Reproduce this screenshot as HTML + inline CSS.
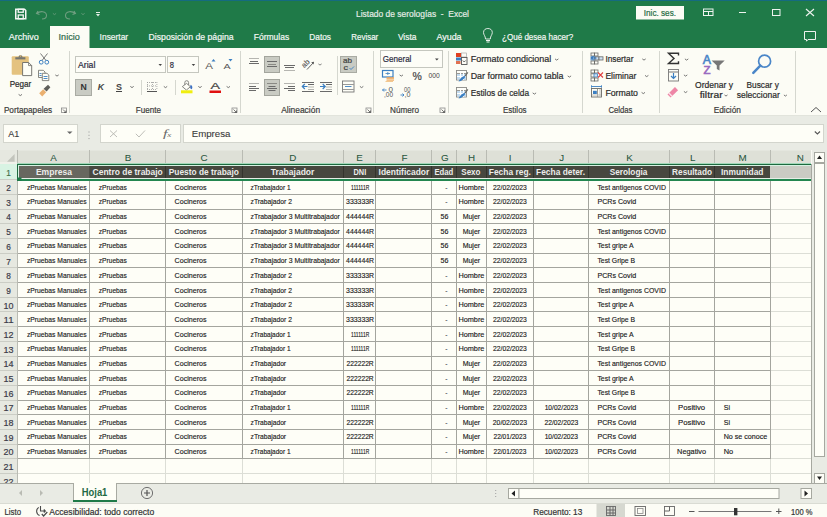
<!DOCTYPE html>
<html><head><meta charset="utf-8"><title>Listado de serologías - Excel</title>
<style>html,body{margin:0;padding:0;background:#fafaf3;overflow:hidden}svg{display:block}text{font-family:"Liberation Sans",sans-serif}</style>
</head><body>
<svg width="827" height="517" viewBox="0 0 827 517" font-family="Liberation Sans, sans-serif">
<rect x="0" y="0" width="827" height="48" fill="#1f7a48"/>
<rect x="0" y="0" width="827" height="1" fill="#156b80"/>
<path d="M15.75 9.25 H24.5 L25.75 10.5 V18.75 H15.75 Z" fill="none" stroke="#f4f7f4" stroke-width="1.5"/>
<rect x="18.25" y="9.25" width="5" height="3" fill="none" stroke="#f4f7f4" stroke-width="1.3"/>
<rect x="18.25" y="15" width="5" height="3.75" fill="none" stroke="#f4f7f4" stroke-width="1.3"/>
<path d="M38 11 L36.5 13.5 L39.5 14.5 M36.8 13.6 C40 10.5 46.5 11 46.5 15.5 C46.5 18 44 19 42 19" fill="none" stroke="#6f9e80" stroke-width="1.1"/>
<path d="M52.90 13.40 L54.50 14.60 L56.10 13.40" fill="none" stroke="#6f9e80" stroke-width="0.8"/>
<path d="M74 11 L75.5 13.5 L72.5 14.5 M75.2 13.6 C72 10.5 65.5 11 65.5 15.5 C65.5 18 68 19 70 19" fill="none" stroke="#6f9e80" stroke-width="1.1"/>
<path d="M81.40 13.40 L83.00 14.60 L84.60 13.40" fill="none" stroke="#6f9e80" stroke-width="0.8"/>
<rect x="96" y="12" width="4" height="1" fill="#e8efe9"/>
<path d="M96 14 L100 14 L98 16.5 Z" fill="#e8efe9"/>
<text x="356.00" y="17.40" font-size="9.3" fill="#e4ece6" stroke="#e4ece6" stroke-width="0.2" textLength="113.00" lengthAdjust="spacingAndGlyphs">Listado de serologías  -  Excel</text>
<rect x="636" y="6" width="48" height="13.5" fill="#fbfbf4"/>
<text x="643.80" y="15.60" font-size="9" fill="#1f6b42" stroke="#1f6b42" stroke-width="0.2" textLength="32.20" lengthAdjust="spacingAndGlyphs">Inic. ses.</text>
<rect x="703.5" y="9" width="9.5" height="6.5" fill="none" stroke="#eef3ef" stroke-width="1"/>
<rect x="704" y="11" width="9" height="1" fill="#eef3ef"/>
<rect x="708" y="11" width="1" height="4" fill="#eef3ef"/>
<rect x="739" y="12" width="7" height="1" fill="#eef3ef"/>
<rect x="772.5" y="9.5" width="7.5" height="6" fill="none" stroke="#eef3ef" stroke-width="1"/>
<path d="M806 9 L814 16 M814 9 L806 16" fill="none" stroke="#eef3ef" stroke-width="1.1"/>
<rect x="50" y="26" width="39.5" height="22" fill="#fcfcf5"/>
<text x="8.70" y="40.00" font-size="9.1" fill="#f4f7f4" stroke="#f4f7f4" stroke-width="0.2" textLength="30.00" lengthAdjust="spacingAndGlyphs">Archivo</text>
<text x="58.60" y="40.00" font-size="9.1" fill="#2e6a4a" stroke="#2e6a4a" stroke-width="0.2" textLength="21.20" lengthAdjust="spacingAndGlyphs">Inicio</text>
<text x="99.60" y="40.00" font-size="9.1" fill="#f4f7f4" stroke="#f4f7f4" stroke-width="0.2" textLength="28.60" lengthAdjust="spacingAndGlyphs">Insertar</text>
<text x="148.50" y="40.00" font-size="9.1" fill="#f4f7f4" stroke="#f4f7f4" stroke-width="0.2" textLength="85.10" lengthAdjust="spacingAndGlyphs">Disposición de página</text>
<text x="253.70" y="40.00" font-size="9.1" fill="#f4f7f4" stroke="#f4f7f4" stroke-width="0.2" textLength="35.50" lengthAdjust="spacingAndGlyphs">Fórmulas</text>
<text x="309.30" y="40.00" font-size="9.1" fill="#f4f7f4" stroke="#f4f7f4" stroke-width="0.2" textLength="21.70" lengthAdjust="spacingAndGlyphs">Datos</text>
<text x="351.20" y="40.00" font-size="9.1" fill="#f4f7f4" stroke="#f4f7f4" stroke-width="0.2" textLength="27.10" lengthAdjust="spacingAndGlyphs">Revisar</text>
<text x="397.90" y="40.00" font-size="9.1" fill="#f4f7f4" stroke="#f4f7f4" stroke-width="0.2" textLength="18.60" lengthAdjust="spacingAndGlyphs">Vista</text>
<text x="436.40" y="40.00" font-size="9.1" fill="#f4f7f4" stroke="#f4f7f4" stroke-width="0.2" textLength="25.20" lengthAdjust="spacingAndGlyphs">Ayuda</text>
<path d="M485.5 39 C485.5 36 483.5 35 483.5 32.5 C483.5 29.8 485.6 28.5 487.9 28.5 C490.2 28.5 492.3 29.8 492.3 32.5 C492.3 35 490.3 36 490.3 39 Z" fill="none" stroke="#f0f4f0" stroke-width="0.9"/>
<rect x="486" y="40" width="4" height="1" fill="#f0f4f0"/>
<rect x="486.5" y="41.5" width="3.0" height="1" fill="#f0f4f0"/>
<text x="502.00" y="40.00" font-size="9.1" fill="#f4f7f4" stroke="#f4f7f4" stroke-width="0.2" textLength="71.20" lengthAdjust="spacingAndGlyphs">¿Qué desea hacer?</text>
<path d="M804.5 31.5 H815.5 V39.5 H808 L806.5 41.2 V39.5 H804.5 Z" fill="none" stroke="#eef3ef" stroke-width="1"/>
<rect x="0" y="48" width="827" height="67" fill="#fcfcf5"/>
<rect x="0" y="115" width="827" height="1" fill="#e2e4dc"/>
<rect x="69" y="51" width="1" height="62" fill="#d5d7cf"/>
<rect x="240" y="51" width="1" height="62" fill="#d5d7cf"/>
<rect x="373" y="51" width="1" height="62" fill="#d5d7cf"/>
<rect x="448" y="51" width="1" height="62" fill="#d5d7cf"/>
<rect x="582" y="51" width="1" height="62" fill="#d5d7cf"/>
<rect x="659" y="51" width="1" height="62" fill="#d5d7cf"/>
<rect x="795" y="51" width="1" height="62" fill="#d5d7cf"/>
<text x="3.90" y="112.60" font-size="8.5" fill="#3c3c3c" stroke="#3c3c3c" stroke-width="0.2" textLength="48.30" lengthAdjust="spacingAndGlyphs">Portapapeles</text>
<text x="135.80" y="112.60" font-size="8.5" fill="#3c3c3c" stroke="#3c3c3c" stroke-width="0.2" textLength="25.20" lengthAdjust="spacingAndGlyphs">Fuente</text>
<text x="281.20" y="112.60" font-size="8.5" fill="#3c3c3c" stroke="#3c3c3c" stroke-width="0.2" textLength="38.90" lengthAdjust="spacingAndGlyphs">Alineación</text>
<text x="390.00" y="112.60" font-size="8.5" fill="#3c3c3c" stroke="#3c3c3c" stroke-width="0.2" textLength="29.00" lengthAdjust="spacingAndGlyphs">Número</text>
<text x="503.00" y="112.60" font-size="8.5" fill="#3c3c3c" stroke="#3c3c3c" stroke-width="0.2" textLength="23.60" lengthAdjust="spacingAndGlyphs">Estilos</text>
<text x="608.40" y="112.60" font-size="8.5" fill="#3c3c3c" stroke="#3c3c3c" stroke-width="0.2" textLength="24.00" lengthAdjust="spacingAndGlyphs">Celdas</text>
<text x="713.70" y="112.60" font-size="8.5" fill="#3c3c3c" stroke="#3c3c3c" stroke-width="0.2" textLength="27.20" lengthAdjust="spacingAndGlyphs">Edición</text>
<rect x="61.5" y="108.0" width="5" height="4.5" fill="none" stroke="#8a8a8a" stroke-width="0.8"/>
<path d="M63 109.5 L66 112.5 M66 110.5 V112.5 H64" fill="none" stroke="#555" stroke-width="0.8"/>
<rect x="232.0" y="108.0" width="5" height="4.5" fill="none" stroke="#8a8a8a" stroke-width="0.8"/>
<path d="M233.5 109.5 L236.5 112.5 M236.5 110.5 V112.5 H234.5" fill="none" stroke="#555" stroke-width="0.8"/>
<rect x="366.0" y="108.0" width="5" height="4.5" fill="none" stroke="#8a8a8a" stroke-width="0.8"/>
<path d="M367.5 109.5 L370.5 112.5 M370.5 110.5 V112.5 H368.5" fill="none" stroke="#555" stroke-width="0.8"/>
<rect x="440.0" y="108.0" width="5" height="4.5" fill="none" stroke="#8a8a8a" stroke-width="0.8"/>
<path d="M441.5 109.5 L444.5 112.5 M444.5 110.5 V112.5 H442.5" fill="none" stroke="#555" stroke-width="0.8"/>
<rect x="11.7" y="56.3" width="17.1" height="18.4" fill="#e4c27f" rx="1"/>
<rect x="15.3" y="57.2" width="10.1" height="2.2" fill="#77776f"/>
<path d="M18.4 57.5 A2.1 2.6 0 0 1 22.6 57.5 Z" fill="#77776f"/>
<circle cx="20.5" cy="56" r="0.8" fill="#e4c27f"/>
<path d="M22.6 62.5 H28.6 L31.7 65.6 V75.6 H22.6 Z" fill="#fefef7" stroke="#6a6a66" stroke-width="0.9"/>
<path d="M28.6 62.5 V65.6 H31.7" fill="none" stroke="#6a6a66" stroke-width="0.8"/>
<text x="9.70" y="86.80" font-size="9.1" fill="#2a2a2a" stroke="#2a2a2a" stroke-width="0.2" textLength="21.60" lengthAdjust="spacingAndGlyphs">Pegar</text>
<path d="M18.60 94.40 L20.30 95.60 L22.00 94.40" fill="none" stroke="#555" stroke-width="0.8"/>
<path d="M40.5 53.5 L46 60.5 M47.5 53.5 L42 60.5" fill="none" stroke="#6a6a6a" stroke-width="0.9"/>
<circle cx="41.2" cy="62.2" r="1.9" fill="none" stroke="#3b7fc2" stroke-width="1"/>
<circle cx="46.8" cy="62.2" r="1.9" fill="none" stroke="#3b7fc2" stroke-width="1"/>
<path d="M38.5 70.3 H43.3 L45 72 V77.5 H38.5 Z" fill="#fefef7" stroke="#6a6a66" stroke-width="0.8"/>
<path d="M42.3 73.3 H47 L48.8 75 V80.6 H42.3 Z" fill="#fefef7" stroke="#6a6a66" stroke-width="0.8"/>
<rect x="39.5" y="73" width="2" height="0.9" fill="#3b7fc2"/>
<rect x="39.5" y="75" width="2" height="0.9" fill="#3b7fc2"/>
<rect x="43.5" y="76" width="4" height="0.9" fill="#3b7fc2"/>
<rect x="43.5" y="78" width="4" height="0.9" fill="#3b7fc2"/>
<path d="M55.30 74.90 L57.00 76.10 L58.70 74.90" fill="none" stroke="#555" stroke-width="0.8"/>
<path d="M39.2 93.3 L43.2 89.3 L46.2 92.3 L42.2 96.6 Z" fill="#eab070"/>
<path d="M43.6 88.8 L48 84.8 L50.4 87.2 L46.6 91.6 Z" fill="#5f5f5a"/>
<rect x="75.5" y="56.5" width="90" height="16" fill="#fdfdf7" stroke="#c5c7bf" stroke-width="1"/>
<text x="78.00" y="68.00" font-size="9.3" fill="#2a2a40" stroke="#2a2a40" stroke-width="0.2" textLength="17.40" lengthAdjust="spacingAndGlyphs">Arial</text>
<path d="M158.5 64 L162 64 L160.25 66 Z" fill="#444"/>
<rect x="167.5" y="56.5" width="31" height="16" fill="#fdfdf7" stroke="#c5c7bf" stroke-width="1"/>
<text x="169.80" y="68.00" font-size="9.3" fill="#2a2a40" stroke="#2a2a40" stroke-width="0.2" textLength="4.20" lengthAdjust="spacingAndGlyphs">8</text>
<path d="M191.7 64 L195.2 64 L193.45 66 Z" fill="#444"/>
<text x="205.30" y="69.20" font-size="9.5" fill="#555" textLength="7.70" lengthAdjust="spacingAndGlyphs">A</text>
<path d="M211.5 61.5 L213.5 59 L215.5 61.5 Z" fill="#3b7fc2"/>
<text x="223.40" y="69.20" font-size="8" fill="#555" textLength="7.10" lengthAdjust="spacingAndGlyphs">A</text>
<path d="M228.5 59 L232.5 59 L230.5 61.5 Z" fill="#3b7fc2"/>
<rect x="75.5" y="79.5" width="16" height="16" fill="#c9cbc3" stroke="#a9aba3" stroke-width="1"/>
<text x="83.60" y="89.90" font-size="8.6" fill="#333" font-weight="bold" text-anchor="middle" textLength="6.30" lengthAdjust="spacingAndGlyphs">N</text>
<text x="100.80" y="89.90" font-size="8.6" fill="#444" font-weight="bold" font-style="italic" text-anchor="middle" textLength="6.30" lengthAdjust="spacingAndGlyphs">K</text>
<text x="119.00" y="89.90" font-size="8.6" fill="#444" font-weight="bold" text-anchor="middle" textLength="6.00" lengthAdjust="spacingAndGlyphs">S</text>
<rect x="116" y="91" width="6" height="1" fill="#444"/>
<path d="M130.30 86.40 L132.00 87.60 L133.70 86.40" fill="none" stroke="#555" stroke-width="0.8"/>
<rect x="141" y="80" width="1" height="15" fill="#d5d7cf"/>
<rect x="147" y="82" width="1" height="0.8" fill="#9a9a9a"/>
<rect x="149" y="82" width="1" height="0.8" fill="#9a9a9a"/>
<rect x="151" y="82" width="1" height="0.8" fill="#9a9a9a"/>
<rect x="153" y="82" width="1" height="0.8" fill="#9a9a9a"/>
<rect x="155" y="82" width="1" height="0.8" fill="#9a9a9a"/>
<rect x="147" y="85.5" width="1" height="0.8" fill="#9a9a9a"/>
<rect x="149" y="85.5" width="1" height="0.8" fill="#9a9a9a"/>
<rect x="151" y="85.5" width="1" height="0.8" fill="#9a9a9a"/>
<rect x="153" y="85.5" width="1" height="0.8" fill="#9a9a9a"/>
<rect x="155" y="85.5" width="1" height="0.8" fill="#9a9a9a"/>
<rect x="147" y="89" width="1" height="0.8" fill="#9a9a9a"/>
<rect x="149" y="89" width="1" height="0.8" fill="#9a9a9a"/>
<rect x="151" y="89" width="1" height="0.8" fill="#9a9a9a"/>
<rect x="153" y="89" width="1" height="0.8" fill="#9a9a9a"/>
<rect x="155" y="89" width="1" height="0.8" fill="#9a9a9a"/>
<rect x="147" y="82" width="0.8" height="1" fill="#9a9a9a"/>
<rect x="147" y="84" width="0.8" height="1" fill="#9a9a9a"/>
<rect x="147" y="86" width="0.8" height="1" fill="#9a9a9a"/>
<rect x="147" y="88" width="0.8" height="1" fill="#9a9a9a"/>
<rect x="152" y="82" width="0.8" height="1" fill="#9a9a9a"/>
<rect x="152" y="84" width="0.8" height="1" fill="#9a9a9a"/>
<rect x="152" y="86" width="0.8" height="1" fill="#9a9a9a"/>
<rect x="152" y="88" width="0.8" height="1" fill="#9a9a9a"/>
<rect x="156.5" y="82" width="0.8" height="1" fill="#9a9a9a"/>
<rect x="156.5" y="84" width="0.8" height="1" fill="#9a9a9a"/>
<rect x="156.5" y="86" width="0.8" height="1" fill="#9a9a9a"/>
<rect x="156.5" y="88" width="0.8" height="1" fill="#9a9a9a"/>
<rect x="147" y="91" width="10" height="1" fill="#555"/>
<path d="M163.80 86.40 L165.50 87.60 L167.20 86.40" fill="none" stroke="#555" stroke-width="0.8"/>
<rect x="175" y="80" width="1" height="15" fill="#d5d7cf"/>
<path d="M184.8 85.5 V82.6 A1.9 1.9 0 0 1 188.6 82.6 V85.5" fill="none" stroke="#7a7a76" stroke-width="0.9"/>
<path d="M182.3 86.6 L186.6 83.4 L190.4 86.8 L186.4 90 Z" fill="#fefef7" stroke="#7a7a76" stroke-width="0.9"/>
<path d="M190.6 84.8 C192.8 86 192.8 88.6 191.2 89.3 C190 88.8 189.9 86.6 190.6 84.8 Z" fill="#3b6fc2"/>
<rect x="181" y="90.3" width="11.5" height="3" fill="#f0ee10"/>
<path d="M198.30 86.40 L200.00 87.60 L201.70 86.40" fill="none" stroke="#555" stroke-width="0.8"/>
<text x="210.50" y="89.40" font-size="8.5" fill="#444" stroke="#444" stroke-width="0.2" textLength="9.50" lengthAdjust="spacingAndGlyphs">A</text>
<rect x="209.5" y="90.5" width="11.5" height="2.5" fill="#e01010"/>
<path d="M226.60 86.40 L228.30 87.60 L230.00 86.40" fill="none" stroke="#555" stroke-width="0.8"/>
<rect x="249" y="58" width="10" height="1" fill="#b5b5b0"/>
<rect x="250" y="61" width="8" height="1" fill="#6a6a6a"/>
<rect x="249" y="63" width="10" height="1" fill="#6a6a6a"/>
<rect x="264.5" y="56.5" width="15" height="16" fill="#c9cbc3" stroke="#a3a59d" stroke-width="1"/>
<rect x="267" y="61" width="10" height="1" fill="#6a6a6a"/>
<rect x="268" y="64" width="8" height="1" fill="#8a8a85"/>
<rect x="267" y="66" width="10" height="1" fill="#6a6a6a"/>
<rect x="284" y="65" width="11" height="1" fill="#6a6a6a"/>
<rect x="285" y="67" width="9" height="1" fill="#6a6a6a"/>
<rect x="284" y="70" width="11" height="1" fill="#b5b5b0"/>
<text x="0" y="0" font-size="7.5" fill="#555" stroke="#555" stroke-width="0.15" transform="translate(304.2,68.2) rotate(-45)">ab</text>
<path d="M307 69.5 L313.5 62.5" fill="none" stroke="#555" stroke-width="0.9"/>
<path d="M311.2 62.3 L314 61.8 L313.6 64.6 Z" fill="#555"/>
<path d="M318.40 63.95 L320.00 65.05 L321.60 63.95" fill="none" stroke="#666" stroke-width="0.8"/>
<rect x="249" y="83" width="10" height="1" fill="#b5b5b0"/>
<rect x="249" y="86" width="7" height="1" fill="#6a6a6a"/>
<rect x="249" y="88" width="10" height="1" fill="#6a6a6a"/>
<rect x="249" y="90" width="7" height="1" fill="#6a6a6a"/>
<rect x="264.5" y="79.5" width="15" height="16" fill="#c9cbc3" stroke="#a3a59d" stroke-width="1"/>
<rect x="267" y="83" width="10" height="1" fill="#8a8a85"/>
<rect x="268.5" y="86" width="7.0" height="1" fill="#6a6a6a"/>
<rect x="267" y="88" width="10" height="1" fill="#6a6a6a"/>
<rect x="268.5" y="90" width="7.0" height="1" fill="#6a6a6a"/>
<rect x="284" y="83" width="11" height="1" fill="#b5b5b0"/>
<rect x="288" y="86" width="7" height="1" fill="#6a6a6a"/>
<rect x="284" y="88" width="11" height="1" fill="#6a6a6a"/>
<rect x="288" y="90" width="7" height="1" fill="#6a6a6a"/>
<rect x="302" y="82" width="12" height="1" fill="#6a6a6a"/>
<rect x="308" y="84" width="6" height="1" fill="#6a6a6a"/>
<rect x="308" y="86.5" width="6" height="1" fill="#b5b5b0"/>
<rect x="308" y="89" width="6" height="1" fill="#b5b5b0"/>
<rect x="302" y="91" width="12" height="1" fill="#6a6a6a"/>
<rect x="320" y="82" width="12" height="1" fill="#6a6a6a"/>
<rect x="326" y="84" width="6" height="1" fill="#6a6a6a"/>
<rect x="326" y="86.5" width="6" height="1" fill="#b5b5b0"/>
<rect x="326" y="89" width="6" height="1" fill="#b5b5b0"/>
<rect x="320" y="91" width="12" height="1" fill="#6a6a6a"/>
<path d="M302.5 86.5 H307.5 M304.8 84 L302.3 86.5 L304.8 89" fill="none" stroke="#3b7fc2" stroke-width="1.2"/>
<path d="M320 86.5 H325 M322.7 84 L325.2 86.5 L322.7 89" fill="none" stroke="#3b7fc2" stroke-width="1.2"/>
<rect x="337" y="56" width="1" height="39" fill="#d5d7cf"/>
<rect x="340.5" y="56.5" width="16" height="16" fill="#c9cbc3" stroke="#a9aba3" stroke-width="1"/>
<text x="343.00" y="63.30" font-size="6.5" fill="#444" stroke="#444" stroke-width="0.2" textLength="9.00" lengthAdjust="spacingAndGlyphs">ab</text>
<text x="343.50" y="69.80" font-size="6.5" fill="#444" stroke="#444" stroke-width="0.2" textLength="4.50" lengthAdjust="spacingAndGlyphs">c</text>
<path d="M349.5 68 L351 69.5 L354 66.5" fill="none" stroke="#3b7fc2" stroke-width="0.9"/>
<rect x="342.5" y="81" width="11.5" height="11" fill="#fdfdf6" stroke="#777" stroke-width="0.9"/>
<rect x="343" y="84" width="11" height="1" fill="#999"/>
<rect x="343" y="89" width="11" height="1" fill="#999"/>
<path d="M345 86.5 H351.5" fill="none" stroke="#3b7fc2" stroke-width="0.9"/>
<path d="M359.90 86.40 L361.60 87.60 L363.30 86.40" fill="none" stroke="#555" stroke-width="0.8"/>
<rect x="380.5" y="50.5" width="62" height="17" fill="#fdfdf7" stroke="#c5c7bf" stroke-width="1"/>
<text x="382.80" y="62.00" font-size="9.2" fill="#2a2a40" stroke="#2a2a40" stroke-width="0.2" textLength="28.60" lengthAdjust="spacingAndGlyphs">General</text>
<path d="M435 58.5 L438.7 58.5 L436.85 60.5 Z" fill="#444"/>
<rect x="382.5" y="70.5" width="10.5" height="6.5" fill="#fefef7" stroke="#3b7fc2" stroke-width="1.2"/>
<path d="M385.5 73.5 H390 M387.8 72 V75" fill="none" stroke="#3b7fc2" stroke-width="0.8"/>
<rect x="386.5" y="77.2" width="7.5" height="1.6" fill="#eda35a"/>
<rect x="386.5" y="79.3" width="7.5" height="1.6" fill="#f2bc80"/>
<rect x="385.5" y="81" width="7.5" height="1" fill="#f2c890"/>
<path d="M399.60 74.90 L401.30 76.10 L403.00 74.90" fill="none" stroke="#555" stroke-width="0.8"/>
<text x="412.50" y="80.00" font-size="10.5" fill="#444" stroke="#444" stroke-width="0.2" textLength="9.30" lengthAdjust="spacingAndGlyphs">%</text>
<text x="428.50" y="78.00" font-size="6.8" fill="#444" textLength="11.20" lengthAdjust="spacingAndGlyphs">000</text>
<text x="388.50" y="92.00" font-size="6.5" fill="#555" textLength="4.50" lengthAdjust="spacingAndGlyphs">0</text>
<text x="384.00" y="97.30" font-size="6.5" fill="#555" textLength="9.00" lengthAdjust="spacingAndGlyphs">,00</text>
<path d="M382.5 90 H386.5 M384 88.5 L382.5 90 L384 91.5" fill="none" stroke="#3b7fc2" stroke-width="0.9"/>
<text x="404.00" y="92.00" font-size="6.5" fill="#555" textLength="6.50" lengthAdjust="spacingAndGlyphs">00</text>
<text x="404.50" y="97.30" font-size="6.5" fill="#555" textLength="6.00" lengthAdjust="spacingAndGlyphs">,0</text>
<path d="M400.5 95 H404 M402.5 93.5 L404 95 L402.5 96.5" fill="none" stroke="#3b7fc2" stroke-width="0.9"/>
<rect x="456" y="53" width="5" height="4" fill="#e04020"/>
<rect x="456" y="57.5" width="5" height="3" fill="#3b7fc2"/>
<rect x="461.5" y="53" width="5" height="4" fill="#fdfdf6" stroke="#999" stroke-width="0.6"/>
<rect x="461.5" y="57.5" width="5.5" height="7" fill="#fdfdf6" stroke="#555" stroke-width="0.9"/>
<path d="M462.8 60.5 L464.2 62 L465.6 60.5" fill="none" stroke="#444" stroke-width="0.8"/>
<rect x="456" y="61" width="4.5" height="3" fill="#e07050"/>
<text x="470.70" y="62.10" font-size="9.2" fill="#2a2a2a" stroke="#2a2a2a" stroke-width="0.2" textLength="80.60" lengthAdjust="spacingAndGlyphs">Formato condicional</text>
<path d="M555.00 58.90 L556.70 60.10 L558.40 58.90" fill="none" stroke="#555" stroke-width="0.8"/>
<rect x="456.5" y="70.5" width="10" height="9.5" fill="#fefef7" stroke="#8a8a86" stroke-width="0.9"/>
<rect x="457" y="73" width="9" height="6.5" fill="#c3dcf0"/>
<rect x="457" y="73" width="9" height="1" fill="#9a9a96"/>
<rect x="457" y="76" width="9" height="1" fill="#ffffff"/>
<rect x="460" y="71" width="1" height="9" fill="#ffffff"/>
<rect x="463" y="71" width="1" height="9" fill="#ffffff"/>
<path d="M464.5 75.5 L467.5 72 L468.3 72.8 L465.5 76.5 Z" fill="#6a6a66"/>
<path d="M458.5 81.5 C459.5 79 462 77 464.5 75.8 L465.3 76.7 C464 79 462 81 458.5 81.5 Z" fill="#3b7fc2"/>
<text x="470.70" y="79.00" font-size="9.2" fill="#2a2a2a" stroke="#2a2a2a" stroke-width="0.2" textLength="92.80" lengthAdjust="spacingAndGlyphs">Dar formato como tabla</text>
<path d="M567.70 75.90 L569.40 77.10 L571.10 75.90" fill="none" stroke="#555" stroke-width="0.8"/>
<rect x="456.5" y="87.5" width="10" height="9.5" fill="#fefef7" stroke="#8a8a86" stroke-width="0.9"/>
<rect x="457" y="90" width="9" height="6.5" fill="#c3dcf0"/>
<rect x="457" y="90" width="9" height="1" fill="#9a9a96"/>
<rect x="457" y="93" width="9" height="1" fill="#ffffff"/>
<rect x="460" y="88" width="1" height="9" fill="#ffffff"/>
<rect x="463" y="88" width="1" height="9" fill="#ffffff"/>
<path d="M464.5 92.5 L467.5 89 L468.3 89.8 L465.5 93.5 Z" fill="#6a6a66"/>
<path d="M458.5 98.5 C459.5 96 462 94 464.5 92.8 L465.3 93.7 C464 96 462 98 458.5 98.5 Z" fill="#3b7fc2"/>
<text x="470.70" y="96.00" font-size="9.2" fill="#2a2a2a" stroke="#2a2a2a" stroke-width="0.2" textLength="58.40" lengthAdjust="spacingAndGlyphs">Estilos de celda</text>
<path d="M532.70 92.90 L534.40 94.10 L536.10 92.90" fill="none" stroke="#555" stroke-width="0.8"/>
<rect x="591.0" y="53.0" width="3.5" height="3" fill="none" stroke="#6a6a66" stroke-width="0.8"/>
<rect x="594.5" y="53.0" width="3.5" height="3" fill="none" stroke="#6a6a66" stroke-width="0.8"/>
<rect x="591.0" y="56.8" width="4" height="3.2" fill="#cfe2f3" stroke="#3b7fc2" stroke-width="0.8"/>
<rect x="595.0" y="56.8" width="4" height="3.2" fill="#cfe2f3" stroke="#6a6a66" stroke-width="0.8"/>
<rect x="599.0" y="56.8" width="4" height="3.2" fill="#cfe2f3" stroke="#6a6a66" stroke-width="0.8"/>
<rect x="591.0" y="61.0" width="3.5" height="3" fill="none" stroke="#6a6a66" stroke-width="0.8"/>
<rect x="594.5" y="61.0" width="3.5" height="3" fill="none" stroke="#6a6a66" stroke-width="0.8"/>
<path d="M596.5 58 H591.5 M593.5 56.3 L591.3 58 L593.5 59.7" fill="none" stroke="#1f66b0" stroke-width="1"/>
<text x="605.40" y="62.00" font-size="9.2" fill="#2a2a2a" stroke="#2a2a2a" stroke-width="0.2" textLength="28.10" lengthAdjust="spacingAndGlyphs">Insertar</text>
<path d="M642.30 58.90 L644.00 60.10 L645.70 58.90" fill="none" stroke="#555" stroke-width="0.8"/>
<rect x="591.0" y="70.0" width="3.5" height="3" fill="none" stroke="#6a6a66" stroke-width="0.8"/>
<rect x="594.5" y="70.0" width="3.5" height="3" fill="none" stroke="#6a6a66" stroke-width="0.8"/>
<rect x="591.0" y="73.8" width="3.5" height="3.2" fill="none" stroke="#6a6a66" stroke-width="0.8"/>
<rect x="594.0" y="73.8" width="3.5" height="3.2" fill="#cfe2f3" stroke="#3b7fc2" stroke-width="0.8"/>
<rect x="591.0" y="78.0" width="3.5" height="3" fill="none" stroke="#6a6a66" stroke-width="0.8"/>
<rect x="594.5" y="78.0" width="3.5" height="3" fill="none" stroke="#6a6a66" stroke-width="0.8"/>
<path d="M598 72.5 L603 77.5 M603 72.5 L598 77.5" fill="none" stroke="#e04040" stroke-width="1.1"/>
<text x="605.40" y="78.70" font-size="9.2" fill="#2a2a2a" stroke="#2a2a2a" stroke-width="0.2" textLength="30.90" lengthAdjust="spacingAndGlyphs">Eliminar</text>
<path d="M645.00 75.40 L646.70 76.60 L648.40 75.40" fill="none" stroke="#555" stroke-width="0.8"/>
<path d="M591.5 86.5 H601.5 M591.5 85.3 V87.7 M601.5 85.3 V87.7" fill="none" stroke="#3b7fc2" stroke-width="0.9"/>
<rect x="591.5" y="88.5" width="10" height="8.5" fill="#fefef7" stroke="#6a6a66" stroke-width="0.9"/>
<rect x="597" y="89" width="1" height="8" fill="#9a9a96"/>
<rect x="599.5" y="89" width="1" height="8" fill="#c0c0bc"/>
<rect x="592" y="94.5" width="9" height="1" fill="#c0c0bc"/>
<rect x="593" y="90.8" width="3.8" height="3.2" fill="#3b7fc2"/>
<text x="605.40" y="95.50" font-size="9.2" fill="#2a2a2a" stroke="#2a2a2a" stroke-width="0.2" textLength="32.60" lengthAdjust="spacingAndGlyphs">Formato</text>
<path d="M641.60 92.40 L643.30 93.60 L645.00 92.40" fill="none" stroke="#555" stroke-width="0.8"/>
<path d="M678.5 55.5 V53.3 H668.5 L674 58.5 L668.5 63.5 H678.5 V61.3" fill="none" stroke="#333" stroke-width="1.4" stroke-linejoin="miter"/>
<path d="M684.90 58.90 L686.60 60.10 L688.30 58.90" fill="none" stroke="#555" stroke-width="0.8"/>
<rect x="668.5" y="69.5" width="10" height="11.5" fill="#fdfdf6" stroke="#777" stroke-width="0.9"/>
<rect x="669" y="71.5" width="9" height="1" fill="#777"/>
<path d="M673.5 73 V78.5 M671 76 L673.5 78.5 L676 76" fill="none" stroke="#3b7fc2" stroke-width="1.2"/>
<path d="M683.90 74.90 L685.60 76.10 L687.30 74.90" fill="none" stroke="#555" stroke-width="0.8"/>
<path d="M667.53 94.46 L674.96 87.03 L678.07 90.14 L670.64 97.57 Z" fill="#ee86a6"/>
<path d="M668.42 93.57 L669.39 92.60 L672.50 95.71 L671.53 96.68 Z" fill="#fbe3ea"/>
<path d="M683.90 91.40 L685.60 92.60 L687.30 91.40" fill="none" stroke="#555" stroke-width="0.8"/>
<text x="706.90" y="64.30" font-size="12" fill="#4a86c8" stroke="#4a86c8" stroke-width="0.6" text-anchor="middle" textLength="8.20" lengthAdjust="spacingAndGlyphs">A</text>
<text x="706.90" y="74.00" font-size="11.5" fill="#9868bf" stroke="#9868bf" stroke-width="0.6" text-anchor="middle" textLength="7.00" lengthAdjust="spacingAndGlyphs">Z</text>
<path d="M711.6 60.5 H724.7 L719.5 65.5 V70.5 L716.8 69 V65.5 Z" fill="#777"/>
<text x="695.00" y="87.60" font-size="9.2" fill="#2a2a2a" stroke="#2a2a2a" stroke-width="0.2" textLength="38.00" lengthAdjust="spacingAndGlyphs">Ordenar y</text>
<text x="699.70" y="98.00" font-size="9.2" fill="#2a2a2a" stroke="#2a2a2a" stroke-width="0.2" textLength="22.90" lengthAdjust="spacingAndGlyphs">filtrar</text>
<path d="M724.50 94.95 L726.00 96.05 L727.50 94.95" fill="none" stroke="#555" stroke-width="0.8"/>
<circle cx="764.6" cy="61.2" r="6" fill="none" stroke="#4a86c8" stroke-width="1.7"/>
<path d="M760.3 65.6 L753.3 72.8" fill="none" stroke="#4a86c8" stroke-width="2.5" stroke-linecap="round"/>
<text x="746.50" y="87.60" font-size="9.2" fill="#2a2a2a" stroke="#2a2a2a" stroke-width="0.2" textLength="32.30" lengthAdjust="spacingAndGlyphs">Buscar y</text>
<text x="736.70" y="98.00" font-size="9.2" fill="#2a2a2a" stroke="#2a2a2a" stroke-width="0.2" textLength="43.10" lengthAdjust="spacingAndGlyphs">seleccionar</text>
<path d="M783.90 94.95 L785.40 96.05 L786.90 94.95" fill="none" stroke="#555" stroke-width="0.8"/>
<path d="M811 112 L816 107.5 L821 112" fill="none" stroke="#555" stroke-width="1"/>
<rect x="0" y="116" width="827" height="34" fill="#e9ebe4"/>
<rect x="3.5" y="124.5" width="74" height="18" fill="#fefef7" stroke="#d3d5cd" stroke-width="1"/>
<text x="8.20" y="136.80" font-size="9.3" fill="#3a3a3a" stroke="#3a3a3a" stroke-width="0.1" textLength="11.10" lengthAdjust="spacingAndGlyphs">A1</text>
<path d="M67 131.5 L72.5 131.5 L69.75 134 Z" fill="#666"/>
<rect x="88.5" y="131.5" width="1" height="1" fill="#999"/>
<rect x="88.5" y="134.8" width="1" height="1" fill="#999"/>
<rect x="88.5" y="138.1" width="1" height="1" fill="#999"/>
<rect x="100.5" y="124.5" width="80" height="18" fill="#fefef7" stroke="#d3d5cd" stroke-width="1"/>
<path d="M110 130.5 L117 137 M117 130.5 L110 137" fill="none" stroke="#b5b5b0" stroke-width="0.9"/>
<path d="M135.8 133.8 L139 137 L145 130.5" fill="none" stroke="#b5b5b0" stroke-width="0.9"/>
<text x="163.00" y="136.80" font-size="10" fill="#6a6a6a" font-style="italic" textLength="4.50" lengthAdjust="spacingAndGlyphs" style="font-family:&quot;Liberation Serif&quot;,serif">f</text>
<text x="167.30" y="137.20" font-size="7" fill="#6a6a6a" font-style="italic" textLength="4.00" lengthAdjust="spacingAndGlyphs" style="font-family:&quot;Liberation Serif&quot;,serif">x</text>
<rect x="183.5" y="124.5" width="640" height="18" fill="#fefef7" stroke="#d3d5cd" stroke-width="1"/>
<text x="191.70" y="137.20" font-size="9.3" fill="#3a3a3a" stroke="#3a3a3a" stroke-width="0.1" textLength="38.70" lengthAdjust="spacingAndGlyphs">Empresa</text>
<path d="M814.80 131.50 L817.40 133.90 L820.00 131.50" fill="none" stroke="#555" stroke-width="1.1"/>
<rect x="17" y="164" width="795" height="319" fill="#fefef7"/>
<rect x="0" y="150" width="17" height="14" fill="#e6e8e0"/>
<rect x="0" y="162" width="17" height="2" fill="#f0f1ea"/>
<path d="M14.6 154 L14.6 161.7 L7 161.7 Z" fill="#c2c4bc"/>
<rect x="0" y="164" width="17" height="319" fill="#e6e8e0"/>
<rect x="17" y="150" width="794" height="13" fill="#dee0d7"/>
<rect x="17" y="150" width="794" height="1" fill="#e4e6de"/>
<rect x="89" y="150" width="1" height="13" fill="#b9bbb3"/>
<rect x="165" y="150" width="1" height="13" fill="#b9bbb3"/>
<rect x="242" y="150" width="1" height="13" fill="#b9bbb3"/>
<rect x="343" y="150" width="1" height="13" fill="#b9bbb3"/>
<rect x="375" y="150" width="1" height="13" fill="#b9bbb3"/>
<rect x="431" y="150" width="1" height="13" fill="#b9bbb3"/>
<rect x="456" y="150" width="1" height="13" fill="#b9bbb3"/>
<rect x="486" y="150" width="1" height="13" fill="#b9bbb3"/>
<rect x="533" y="150" width="1" height="13" fill="#b9bbb3"/>
<rect x="588" y="150" width="1" height="13" fill="#b9bbb3"/>
<rect x="669" y="150" width="1" height="13" fill="#b9bbb3"/>
<rect x="714" y="150" width="1" height="13" fill="#b9bbb3"/>
<rect x="770" y="150" width="1" height="13" fill="#b9bbb3"/>
<text x="53.40" y="160.80" font-size="9.8" fill="#27553d" stroke="#27553d" stroke-width="0.05" text-anchor="middle">A</text>
<text x="128.00" y="160.80" font-size="9.8" fill="#27553d" stroke="#27553d" stroke-width="0.05" text-anchor="middle">B</text>
<text x="204.00" y="160.80" font-size="9.8" fill="#27553d" stroke="#27553d" stroke-width="0.05" text-anchor="middle">C</text>
<text x="292.70" y="160.80" font-size="9.8" fill="#27553d" stroke="#27553d" stroke-width="0.05" text-anchor="middle">D</text>
<text x="359.50" y="160.80" font-size="9.8" fill="#27553d" stroke="#27553d" stroke-width="0.05" text-anchor="middle">E</text>
<text x="404.40" y="160.80" font-size="9.8" fill="#27553d" stroke="#27553d" stroke-width="0.05" text-anchor="middle">F</text>
<text x="444.70" y="160.80" font-size="9.8" fill="#27553d" stroke="#27553d" stroke-width="0.05" text-anchor="middle">G</text>
<text x="471.60" y="160.80" font-size="9.8" fill="#27553d" stroke="#27553d" stroke-width="0.05" text-anchor="middle">H</text>
<text x="510.00" y="160.80" font-size="9.8" fill="#27553d" stroke="#27553d" stroke-width="0.05" text-anchor="middle">I</text>
<text x="561.60" y="160.80" font-size="9.8" fill="#27553d" stroke="#27553d" stroke-width="0.05" text-anchor="middle">J</text>
<text x="629.50" y="160.80" font-size="9.8" fill="#27553d" stroke="#27553d" stroke-width="0.05" text-anchor="middle">K</text>
<text x="692.70" y="160.80" font-size="9.8" fill="#27553d" stroke="#27553d" stroke-width="0.05" text-anchor="middle">L</text>
<text x="742.70" y="160.80" font-size="9.8" fill="#27553d" stroke="#27553d" stroke-width="0.05" text-anchor="middle">M</text>
<text x="800.20" y="160.80" font-size="9.8" fill="#27553d" stroke="#27553d" stroke-width="0.05" text-anchor="middle">N</text>
<rect x="0" y="179" width="17" height="1" fill="#cbcdc5"/>
<rect x="0" y="194" width="17" height="1" fill="#cbcdc5"/>
<rect x="0" y="209" width="17" height="1" fill="#cbcdc5"/>
<rect x="0" y="223" width="17" height="1" fill="#cbcdc5"/>
<rect x="0" y="238" width="17" height="1" fill="#cbcdc5"/>
<rect x="0" y="253" width="17" height="1" fill="#cbcdc5"/>
<rect x="0" y="267" width="17" height="1" fill="#cbcdc5"/>
<rect x="0" y="282" width="17" height="1" fill="#cbcdc5"/>
<rect x="0" y="297" width="17" height="1" fill="#cbcdc5"/>
<rect x="0" y="311" width="17" height="1" fill="#cbcdc5"/>
<rect x="0" y="326" width="17" height="1" fill="#cbcdc5"/>
<rect x="0" y="341" width="17" height="1" fill="#cbcdc5"/>
<rect x="0" y="356" width="17" height="1" fill="#cbcdc5"/>
<rect x="0" y="370" width="17" height="1" fill="#cbcdc5"/>
<rect x="0" y="385" width="17" height="1" fill="#cbcdc5"/>
<rect x="0" y="400" width="17" height="1" fill="#cbcdc5"/>
<rect x="0" y="414" width="17" height="1" fill="#cbcdc5"/>
<rect x="0" y="429" width="17" height="1" fill="#cbcdc5"/>
<rect x="0" y="444" width="17" height="1" fill="#cbcdc5"/>
<rect x="0" y="458" width="17" height="1" fill="#cbcdc5"/>
<rect x="0" y="473" width="17" height="1" fill="#cbcdc5"/>
<rect x="17" y="150" width="1" height="333" fill="#b9bbb3"/>
<rect x="0" y="164" width="17" height="15" fill="#d8f3e3"/>
<rect x="18" y="458" width="793" height="1" fill="#dcded6"/>
<rect x="18" y="473" width="793" height="1" fill="#dcded6"/>
<rect x="18" y="488" width="793" height="1" fill="#dcded6"/>
<rect x="89" y="458" width="1" height="25" fill="#dcded6"/>
<rect x="165" y="458" width="1" height="25" fill="#dcded6"/>
<rect x="242" y="458" width="1" height="25" fill="#dcded6"/>
<rect x="343" y="458" width="1" height="25" fill="#dcded6"/>
<rect x="375" y="458" width="1" height="25" fill="#dcded6"/>
<rect x="431" y="458" width="1" height="25" fill="#dcded6"/>
<rect x="456" y="458" width="1" height="25" fill="#dcded6"/>
<rect x="486" y="458" width="1" height="25" fill="#dcded6"/>
<rect x="533" y="458" width="1" height="25" fill="#dcded6"/>
<rect x="588" y="458" width="1" height="25" fill="#dcded6"/>
<rect x="669" y="458" width="1" height="25" fill="#dcded6"/>
<rect x="714" y="458" width="1" height="25" fill="#dcded6"/>
<rect x="770" y="458" width="1" height="25" fill="#dcded6"/>
<rect x="771" y="179" width="40" height="1" fill="#dcded6"/>
<rect x="771" y="194" width="40" height="1" fill="#dcded6"/>
<rect x="771" y="209" width="40" height="1" fill="#dcded6"/>
<rect x="771" y="223" width="40" height="1" fill="#dcded6"/>
<rect x="771" y="238" width="40" height="1" fill="#dcded6"/>
<rect x="771" y="253" width="40" height="1" fill="#dcded6"/>
<rect x="771" y="267" width="40" height="1" fill="#dcded6"/>
<rect x="771" y="282" width="40" height="1" fill="#dcded6"/>
<rect x="771" y="297" width="40" height="1" fill="#dcded6"/>
<rect x="771" y="311" width="40" height="1" fill="#dcded6"/>
<rect x="771" y="326" width="40" height="1" fill="#dcded6"/>
<rect x="771" y="341" width="40" height="1" fill="#dcded6"/>
<rect x="771" y="356" width="40" height="1" fill="#dcded6"/>
<rect x="771" y="370" width="40" height="1" fill="#dcded6"/>
<rect x="771" y="385" width="40" height="1" fill="#dcded6"/>
<rect x="771" y="400" width="40" height="1" fill="#dcded6"/>
<rect x="771" y="414" width="40" height="1" fill="#dcded6"/>
<rect x="771" y="429" width="40" height="1" fill="#dcded6"/>
<rect x="771" y="444" width="40" height="1" fill="#dcded6"/>
<rect x="771" y="458" width="40" height="1" fill="#dcded6"/>
<rect x="811" y="164" width="1" height="319" fill="#a6a8a0"/>
<rect x="18" y="194" width="753" height="1" fill="#a4a59e"/>
<rect x="18" y="209" width="753" height="1" fill="#a4a59e"/>
<rect x="18" y="223" width="753" height="1" fill="#a4a59e"/>
<rect x="18" y="238" width="753" height="1" fill="#a4a59e"/>
<rect x="18" y="253" width="753" height="1" fill="#a4a59e"/>
<rect x="18" y="267" width="753" height="1" fill="#a4a59e"/>
<rect x="18" y="282" width="753" height="1" fill="#a4a59e"/>
<rect x="18" y="297" width="753" height="1" fill="#a4a59e"/>
<rect x="18" y="311" width="753" height="1" fill="#a4a59e"/>
<rect x="18" y="326" width="753" height="1" fill="#a4a59e"/>
<rect x="18" y="341" width="753" height="1" fill="#a4a59e"/>
<rect x="18" y="356" width="753" height="1" fill="#a4a59e"/>
<rect x="18" y="370" width="753" height="1" fill="#a4a59e"/>
<rect x="18" y="385" width="753" height="1" fill="#a4a59e"/>
<rect x="18" y="400" width="753" height="1" fill="#a4a59e"/>
<rect x="18" y="414" width="753" height="1" fill="#a4a59e"/>
<rect x="18" y="429" width="753" height="1" fill="#a4a59e"/>
<rect x="18" y="444" width="753" height="1" fill="#a4a59e"/>
<rect x="18" y="458" width="753" height="1" fill="#a4a59e"/>
<rect x="89" y="180" width="1" height="279" fill="#a4a59e"/>
<rect x="165" y="180" width="1" height="279" fill="#a4a59e"/>
<rect x="242" y="180" width="1" height="279" fill="#a4a59e"/>
<rect x="343" y="180" width="1" height="279" fill="#a4a59e"/>
<rect x="375" y="180" width="1" height="279" fill="#a4a59e"/>
<rect x="431" y="180" width="1" height="279" fill="#a4a59e"/>
<rect x="456" y="180" width="1" height="279" fill="#a4a59e"/>
<rect x="486" y="180" width="1" height="279" fill="#a4a59e"/>
<rect x="533" y="180" width="1" height="279" fill="#a4a59e"/>
<rect x="588" y="180" width="1" height="279" fill="#a4a59e"/>
<rect x="669" y="180" width="1" height="279" fill="#a4a59e"/>
<rect x="714" y="180" width="1" height="279" fill="#a4a59e"/>
<rect x="770" y="180" width="1" height="279" fill="#a4a59e"/>
<text x="8.60" y="176.43" font-size="9.8" fill="#3f7048" stroke="#3f7048" stroke-width="0.2" text-anchor="middle" textLength="4.60" lengthAdjust="spacingAndGlyphs">1</text>
<text x="8.60" y="191.11" font-size="9.8" fill="#3a3a48" stroke="#3a3a48" stroke-width="0.2" text-anchor="middle" textLength="4.60" lengthAdjust="spacingAndGlyphs">2</text>
<text x="8.60" y="205.80" font-size="9.8" fill="#3a3a48" stroke="#3a3a48" stroke-width="0.2" text-anchor="middle" textLength="4.60" lengthAdjust="spacingAndGlyphs">3</text>
<text x="8.60" y="220.48" font-size="9.8" fill="#3a3a48" stroke="#3a3a48" stroke-width="0.2" text-anchor="middle" textLength="4.60" lengthAdjust="spacingAndGlyphs">4</text>
<text x="8.60" y="235.17" font-size="9.8" fill="#3a3a48" stroke="#3a3a48" stroke-width="0.2" text-anchor="middle" textLength="4.60" lengthAdjust="spacingAndGlyphs">5</text>
<text x="8.60" y="249.85" font-size="9.8" fill="#3a3a48" stroke="#3a3a48" stroke-width="0.2" text-anchor="middle" textLength="4.60" lengthAdjust="spacingAndGlyphs">6</text>
<text x="8.60" y="264.53" font-size="9.8" fill="#3a3a48" stroke="#3a3a48" stroke-width="0.2" text-anchor="middle" textLength="4.60" lengthAdjust="spacingAndGlyphs">7</text>
<text x="8.60" y="279.22" font-size="9.8" fill="#3a3a48" stroke="#3a3a48" stroke-width="0.2" text-anchor="middle" textLength="4.60" lengthAdjust="spacingAndGlyphs">8</text>
<text x="8.60" y="293.90" font-size="9.8" fill="#3a3a48" stroke="#3a3a48" stroke-width="0.2" text-anchor="middle" textLength="4.60" lengthAdjust="spacingAndGlyphs">9</text>
<text x="8.60" y="308.59" font-size="9.8" fill="#3a3a48" stroke="#3a3a48" stroke-width="0.2" text-anchor="middle" textLength="10.00" lengthAdjust="spacingAndGlyphs">10</text>
<text x="8.60" y="323.27" font-size="9.8" fill="#3a3a48" stroke="#3a3a48" stroke-width="0.2" text-anchor="middle" textLength="10.00" lengthAdjust="spacingAndGlyphs">11</text>
<text x="8.60" y="337.95" font-size="9.8" fill="#3a3a48" stroke="#3a3a48" stroke-width="0.2" text-anchor="middle" textLength="10.00" lengthAdjust="spacingAndGlyphs">12</text>
<text x="8.60" y="352.64" font-size="9.8" fill="#3a3a48" stroke="#3a3a48" stroke-width="0.2" text-anchor="middle" textLength="10.00" lengthAdjust="spacingAndGlyphs">13</text>
<text x="8.60" y="367.32" font-size="9.8" fill="#3a3a48" stroke="#3a3a48" stroke-width="0.2" text-anchor="middle" textLength="10.00" lengthAdjust="spacingAndGlyphs">14</text>
<text x="8.60" y="382.01" font-size="9.8" fill="#3a3a48" stroke="#3a3a48" stroke-width="0.2" text-anchor="middle" textLength="10.00" lengthAdjust="spacingAndGlyphs">15</text>
<text x="8.60" y="396.69" font-size="9.8" fill="#3a3a48" stroke="#3a3a48" stroke-width="0.2" text-anchor="middle" textLength="10.00" lengthAdjust="spacingAndGlyphs">16</text>
<text x="8.60" y="411.37" font-size="9.8" fill="#3a3a48" stroke="#3a3a48" stroke-width="0.2" text-anchor="middle" textLength="10.00" lengthAdjust="spacingAndGlyphs">17</text>
<text x="8.60" y="426.06" font-size="9.8" fill="#3a3a48" stroke="#3a3a48" stroke-width="0.2" text-anchor="middle" textLength="10.00" lengthAdjust="spacingAndGlyphs">18</text>
<text x="8.60" y="440.74" font-size="9.8" fill="#3a3a48" stroke="#3a3a48" stroke-width="0.2" text-anchor="middle" textLength="10.00" lengthAdjust="spacingAndGlyphs">19</text>
<text x="8.60" y="455.43" font-size="9.8" fill="#3a3a48" stroke="#3a3a48" stroke-width="0.2" text-anchor="middle" textLength="10.00" lengthAdjust="spacingAndGlyphs">20</text>
<text x="8.60" y="470.11" font-size="9.8" fill="#3a3a48" stroke="#3a3a48" stroke-width="0.2" text-anchor="middle" textLength="10.00" lengthAdjust="spacingAndGlyphs">21</text>
<text x="8.60" y="484.79" font-size="9.8" fill="#3a3a48" stroke="#3a3a48" stroke-width="0.2" text-anchor="middle" textLength="10.00" lengthAdjust="spacingAndGlyphs">22</text>
<rect x="17" y="163" width="794" height="17" fill="#cacbc3"/>
<rect x="17" y="163" width="794" height="1" fill="#a3d8ba"/>
<rect x="19" y="166" width="751" height="12" fill="#47473f"/>
<rect x="19" y="166" width="70" height="12" fill="#67675f"/>
<rect x="165" y="166" width="1" height="12" fill="#33332d"/>
<rect x="242" y="166" width="1" height="12" fill="#33332d"/>
<rect x="343" y="166" width="1" height="12" fill="#33332d"/>
<rect x="375" y="166" width="1" height="12" fill="#33332d"/>
<rect x="431" y="166" width="1" height="12" fill="#33332d"/>
<rect x="456" y="166" width="1" height="12" fill="#33332d"/>
<rect x="486" y="166" width="1" height="12" fill="#33332d"/>
<rect x="533" y="166" width="1" height="12" fill="#33332d"/>
<rect x="588" y="166" width="1" height="12" fill="#33332d"/>
<rect x="669" y="166" width="1" height="12" fill="#33332d"/>
<rect x="714" y="166" width="1" height="12" fill="#33332d"/>
<rect x="89" y="166" width="1" height="12" fill="#505049"/>
<rect x="17" y="165" width="794" height="1" fill="#d6f2e2"/>
<rect x="17" y="178" width="794" height="1" fill="#e6eee6"/>
<rect x="18" y="165" width="1" height="14" fill="#d6f2e2"/>
<rect x="17" y="164" width="794" height="1" fill="#1d6a3f"/>
<rect x="17" y="179" width="794" height="2" fill="#238650"/>
<rect x="17" y="164" width="1" height="17" fill="#1d6a3f"/>
<rect x="17" y="177.5" width="4.5" height="3.5" fill="#1f7a48"/>
<text x="35.90" y="174.70" font-size="8.4" fill="#ececea" font-weight="bold" textLength="36.10" lengthAdjust="spacingAndGlyphs">Empresa</text>
<text x="92.60" y="174.70" font-size="8.4" fill="#ececea" font-weight="bold" textLength="70.20" lengthAdjust="spacingAndGlyphs">Centro de trabajo</text>
<text x="168.80" y="174.70" font-size="8.4" fill="#ececea" font-weight="bold" textLength="70.10" lengthAdjust="spacingAndGlyphs">Puesto de trabajo</text>
<text x="270.80" y="174.70" font-size="8.4" fill="#ececea" font-weight="bold" textLength="43.60" lengthAdjust="spacingAndGlyphs">Trabajador</text>
<text x="353.50" y="174.70" font-size="8.4" fill="#ececea" font-weight="bold" textLength="12.70" lengthAdjust="spacingAndGlyphs">DNI</text>
<text x="378.60" y="174.70" font-size="8.4" fill="#ececea" font-weight="bold" textLength="50.70" lengthAdjust="spacingAndGlyphs">Identificador</text>
<text x="434.40" y="174.70" font-size="8.4" fill="#ececea" font-weight="bold" textLength="18.90" lengthAdjust="spacingAndGlyphs">Edad</text>
<text x="461.30" y="174.70" font-size="8.4" fill="#ececea" font-weight="bold" textLength="19.20" lengthAdjust="spacingAndGlyphs">Sexo</text>
<text x="488.80" y="174.70" font-size="8.4" fill="#ececea" font-weight="bold" textLength="42.10" lengthAdjust="spacingAndGlyphs">Fecha reg.</text>
<text x="536.10" y="174.70" font-size="8.4" fill="#ececea" font-weight="bold" textLength="48.90" lengthAdjust="spacingAndGlyphs">Fecha deter.</text>
<text x="609.70" y="174.70" font-size="8.4" fill="#ececea" font-weight="bold" textLength="37.70" lengthAdjust="spacingAndGlyphs">Serologia</text>
<text x="672.10" y="174.70" font-size="8.4" fill="#ececea" font-weight="bold" textLength="39.90" lengthAdjust="spacingAndGlyphs">Resultado</text>
<text x="721.00" y="174.70" font-size="8.4" fill="#ececea" font-weight="bold" textLength="42.50" lengthAdjust="spacingAndGlyphs">Inmunidad</text>
<text x="27.00" y="189.71" font-size="7.3" fill="#1a1a1a" stroke="#1a1a1a" stroke-width="0.14" textLength="59.60" lengthAdjust="spacingAndGlyphs">zPruebas Manuales</text>
<text x="98.80" y="189.71" font-size="7.3" fill="#1a1a1a" stroke="#1a1a1a" stroke-width="0.14" textLength="28.00" lengthAdjust="spacingAndGlyphs">zPruebas</text>
<text x="174.60" y="189.71" font-size="7.3" fill="#1a1a1a" stroke="#1a1a1a" stroke-width="0.14" textLength="32.00" lengthAdjust="spacingAndGlyphs">Cocineros</text>
<text x="250.60" y="189.71" font-size="7.3" fill="#1a1a1a" stroke="#1a1a1a" stroke-width="0.14" textLength="40.00" lengthAdjust="spacingAndGlyphs">zTrabajador 1</text>
<text x="360.10" y="189.71" font-size="7.3" fill="#1a1a1a" stroke="#1a1a1a" stroke-width="0.14" text-anchor="middle" textLength="18.20" lengthAdjust="spacingAndGlyphs">111111R</text>
<text x="446.30" y="189.71" font-size="7.3" fill="#1a1a1a" stroke="#1a1a1a" stroke-width="0.14" text-anchor="middle" textLength="2.20" lengthAdjust="spacingAndGlyphs">-</text>
<text x="471.40" y="189.71" font-size="7.3" fill="#1a1a1a" stroke="#1a1a1a" stroke-width="0.14" text-anchor="middle" textLength="26.00" lengthAdjust="spacingAndGlyphs">Hombre</text>
<text x="509.90" y="189.71" font-size="7.3" fill="#1a1a1a" stroke="#1a1a1a" stroke-width="0.14" text-anchor="middle" textLength="33.80" lengthAdjust="spacingAndGlyphs">22/02/2023</text>
<text x="597.40" y="189.71" font-size="7.3" fill="#1a1a1a" stroke="#1a1a1a" stroke-width="0.14" textLength="68.50" lengthAdjust="spacingAndGlyphs">Test antigenos COVID</text>
<text x="27.00" y="204.40" font-size="7.3" fill="#1a1a1a" stroke="#1a1a1a" stroke-width="0.14" textLength="59.60" lengthAdjust="spacingAndGlyphs">zPruebas Manuales</text>
<text x="98.80" y="204.40" font-size="7.3" fill="#1a1a1a" stroke="#1a1a1a" stroke-width="0.14" textLength="28.00" lengthAdjust="spacingAndGlyphs">zPruebas</text>
<text x="174.60" y="204.40" font-size="7.3" fill="#1a1a1a" stroke="#1a1a1a" stroke-width="0.14" textLength="32.00" lengthAdjust="spacingAndGlyphs">Cocineros</text>
<text x="250.60" y="204.40" font-size="7.3" fill="#1a1a1a" stroke="#1a1a1a" stroke-width="0.14" textLength="41.30" lengthAdjust="spacingAndGlyphs">zTrabajador 2</text>
<text x="360.10" y="204.40" font-size="7.3" fill="#1a1a1a" stroke="#1a1a1a" stroke-width="0.14" text-anchor="middle" textLength="28.00" lengthAdjust="spacingAndGlyphs">333333R</text>
<text x="446.30" y="204.40" font-size="7.3" fill="#1a1a1a" stroke="#1a1a1a" stroke-width="0.14" text-anchor="middle" textLength="2.20" lengthAdjust="spacingAndGlyphs">-</text>
<text x="471.40" y="204.40" font-size="7.3" fill="#1a1a1a" stroke="#1a1a1a" stroke-width="0.14" text-anchor="middle" textLength="26.00" lengthAdjust="spacingAndGlyphs">Hombre</text>
<text x="509.90" y="204.40" font-size="7.3" fill="#1a1a1a" stroke="#1a1a1a" stroke-width="0.14" text-anchor="middle" textLength="33.80" lengthAdjust="spacingAndGlyphs">22/02/2023</text>
<text x="597.40" y="204.40" font-size="7.3" fill="#1a1a1a" stroke="#1a1a1a" stroke-width="0.14" textLength="38.80" lengthAdjust="spacingAndGlyphs">PCRs Covid</text>
<text x="27.00" y="219.08" font-size="7.3" fill="#1a1a1a" stroke="#1a1a1a" stroke-width="0.14" textLength="59.60" lengthAdjust="spacingAndGlyphs">zPruebas Manuales</text>
<text x="98.80" y="219.08" font-size="7.3" fill="#1a1a1a" stroke="#1a1a1a" stroke-width="0.14" textLength="28.00" lengthAdjust="spacingAndGlyphs">zPruebas</text>
<text x="174.60" y="219.08" font-size="7.3" fill="#1a1a1a" stroke="#1a1a1a" stroke-width="0.14" textLength="32.00" lengthAdjust="spacingAndGlyphs">Cocineros</text>
<text x="250.60" y="219.08" font-size="7.3" fill="#1a1a1a" stroke="#1a1a1a" stroke-width="0.14" textLength="89.20" lengthAdjust="spacingAndGlyphs">zTrabajador 3 Multitrabajador</text>
<text x="360.10" y="219.08" font-size="7.3" fill="#1a1a1a" stroke="#1a1a1a" stroke-width="0.14" text-anchor="middle" textLength="28.00" lengthAdjust="spacingAndGlyphs">444444R</text>
<text x="444.40" y="219.08" font-size="7.3" fill="#1a1a1a" stroke="#1a1a1a" stroke-width="0.14" text-anchor="middle" textLength="7.90" lengthAdjust="spacingAndGlyphs">56</text>
<text x="471.40" y="219.08" font-size="7.3" fill="#1a1a1a" stroke="#1a1a1a" stroke-width="0.14" text-anchor="middle" textLength="17.50" lengthAdjust="spacingAndGlyphs">Mujer</text>
<text x="509.90" y="219.08" font-size="7.3" fill="#1a1a1a" stroke="#1a1a1a" stroke-width="0.14" text-anchor="middle" textLength="33.80" lengthAdjust="spacingAndGlyphs">22/02/2023</text>
<text x="597.40" y="219.08" font-size="7.3" fill="#1a1a1a" stroke="#1a1a1a" stroke-width="0.14" textLength="38.80" lengthAdjust="spacingAndGlyphs">PCRs Covid</text>
<text x="27.00" y="233.77" font-size="7.3" fill="#1a1a1a" stroke="#1a1a1a" stroke-width="0.14" textLength="59.60" lengthAdjust="spacingAndGlyphs">zPruebas Manuales</text>
<text x="98.80" y="233.77" font-size="7.3" fill="#1a1a1a" stroke="#1a1a1a" stroke-width="0.14" textLength="28.00" lengthAdjust="spacingAndGlyphs">zPruebas</text>
<text x="174.60" y="233.77" font-size="7.3" fill="#1a1a1a" stroke="#1a1a1a" stroke-width="0.14" textLength="32.00" lengthAdjust="spacingAndGlyphs">Cocineros</text>
<text x="250.60" y="233.77" font-size="7.3" fill="#1a1a1a" stroke="#1a1a1a" stroke-width="0.14" textLength="89.20" lengthAdjust="spacingAndGlyphs">zTrabajador 3 Multitrabajador</text>
<text x="360.10" y="233.77" font-size="7.3" fill="#1a1a1a" stroke="#1a1a1a" stroke-width="0.14" text-anchor="middle" textLength="28.00" lengthAdjust="spacingAndGlyphs">444444R</text>
<text x="444.40" y="233.77" font-size="7.3" fill="#1a1a1a" stroke="#1a1a1a" stroke-width="0.14" text-anchor="middle" textLength="7.90" lengthAdjust="spacingAndGlyphs">56</text>
<text x="471.40" y="233.77" font-size="7.3" fill="#1a1a1a" stroke="#1a1a1a" stroke-width="0.14" text-anchor="middle" textLength="17.50" lengthAdjust="spacingAndGlyphs">Mujer</text>
<text x="509.90" y="233.77" font-size="7.3" fill="#1a1a1a" stroke="#1a1a1a" stroke-width="0.14" text-anchor="middle" textLength="33.80" lengthAdjust="spacingAndGlyphs">22/02/2023</text>
<text x="597.40" y="233.77" font-size="7.3" fill="#1a1a1a" stroke="#1a1a1a" stroke-width="0.14" textLength="68.50" lengthAdjust="spacingAndGlyphs">Test antigenos COVID</text>
<text x="27.00" y="248.45" font-size="7.3" fill="#1a1a1a" stroke="#1a1a1a" stroke-width="0.14" textLength="59.60" lengthAdjust="spacingAndGlyphs">zPruebas Manuales</text>
<text x="98.80" y="248.45" font-size="7.3" fill="#1a1a1a" stroke="#1a1a1a" stroke-width="0.14" textLength="28.00" lengthAdjust="spacingAndGlyphs">zPruebas</text>
<text x="174.60" y="248.45" font-size="7.3" fill="#1a1a1a" stroke="#1a1a1a" stroke-width="0.14" textLength="32.00" lengthAdjust="spacingAndGlyphs">Cocineros</text>
<text x="250.60" y="248.45" font-size="7.3" fill="#1a1a1a" stroke="#1a1a1a" stroke-width="0.14" textLength="89.20" lengthAdjust="spacingAndGlyphs">zTrabajador 3 Multitrabajador</text>
<text x="360.10" y="248.45" font-size="7.3" fill="#1a1a1a" stroke="#1a1a1a" stroke-width="0.14" text-anchor="middle" textLength="28.00" lengthAdjust="spacingAndGlyphs">444444R</text>
<text x="444.40" y="248.45" font-size="7.3" fill="#1a1a1a" stroke="#1a1a1a" stroke-width="0.14" text-anchor="middle" textLength="7.90" lengthAdjust="spacingAndGlyphs">56</text>
<text x="471.40" y="248.45" font-size="7.3" fill="#1a1a1a" stroke="#1a1a1a" stroke-width="0.14" text-anchor="middle" textLength="17.50" lengthAdjust="spacingAndGlyphs">Mujer</text>
<text x="509.90" y="248.45" font-size="7.3" fill="#1a1a1a" stroke="#1a1a1a" stroke-width="0.14" text-anchor="middle" textLength="33.80" lengthAdjust="spacingAndGlyphs">22/02/2023</text>
<text x="597.40" y="248.45" font-size="7.3" fill="#1a1a1a" stroke="#1a1a1a" stroke-width="0.14" textLength="36.20" lengthAdjust="spacingAndGlyphs">Test gripe A</text>
<text x="27.00" y="263.13" font-size="7.3" fill="#1a1a1a" stroke="#1a1a1a" stroke-width="0.14" textLength="59.60" lengthAdjust="spacingAndGlyphs">zPruebas Manuales</text>
<text x="98.80" y="263.13" font-size="7.3" fill="#1a1a1a" stroke="#1a1a1a" stroke-width="0.14" textLength="28.00" lengthAdjust="spacingAndGlyphs">zPruebas</text>
<text x="174.60" y="263.13" font-size="7.3" fill="#1a1a1a" stroke="#1a1a1a" stroke-width="0.14" textLength="32.00" lengthAdjust="spacingAndGlyphs">Cocineros</text>
<text x="250.60" y="263.13" font-size="7.3" fill="#1a1a1a" stroke="#1a1a1a" stroke-width="0.14" textLength="89.20" lengthAdjust="spacingAndGlyphs">zTrabajador 3 Multitrabajador</text>
<text x="360.10" y="263.13" font-size="7.3" fill="#1a1a1a" stroke="#1a1a1a" stroke-width="0.14" text-anchor="middle" textLength="28.00" lengthAdjust="spacingAndGlyphs">444444R</text>
<text x="444.40" y="263.13" font-size="7.3" fill="#1a1a1a" stroke="#1a1a1a" stroke-width="0.14" text-anchor="middle" textLength="7.90" lengthAdjust="spacingAndGlyphs">56</text>
<text x="471.40" y="263.13" font-size="7.3" fill="#1a1a1a" stroke="#1a1a1a" stroke-width="0.14" text-anchor="middle" textLength="17.50" lengthAdjust="spacingAndGlyphs">Mujer</text>
<text x="509.90" y="263.13" font-size="7.3" fill="#1a1a1a" stroke="#1a1a1a" stroke-width="0.14" text-anchor="middle" textLength="33.80" lengthAdjust="spacingAndGlyphs">22/02/2023</text>
<text x="597.40" y="263.13" font-size="7.3" fill="#1a1a1a" stroke="#1a1a1a" stroke-width="0.14" textLength="37.70" lengthAdjust="spacingAndGlyphs">Test Gripe B</text>
<text x="27.00" y="277.82" font-size="7.3" fill="#1a1a1a" stroke="#1a1a1a" stroke-width="0.14" textLength="59.60" lengthAdjust="spacingAndGlyphs">zPruebas Manuales</text>
<text x="98.80" y="277.82" font-size="7.3" fill="#1a1a1a" stroke="#1a1a1a" stroke-width="0.14" textLength="28.00" lengthAdjust="spacingAndGlyphs">zPruebas</text>
<text x="174.60" y="277.82" font-size="7.3" fill="#1a1a1a" stroke="#1a1a1a" stroke-width="0.14" textLength="32.00" lengthAdjust="spacingAndGlyphs">Cocineros</text>
<text x="250.60" y="277.82" font-size="7.3" fill="#1a1a1a" stroke="#1a1a1a" stroke-width="0.14" textLength="41.30" lengthAdjust="spacingAndGlyphs">zTrabajador 2</text>
<text x="360.10" y="277.82" font-size="7.3" fill="#1a1a1a" stroke="#1a1a1a" stroke-width="0.14" text-anchor="middle" textLength="28.00" lengthAdjust="spacingAndGlyphs">333333R</text>
<text x="446.30" y="277.82" font-size="7.3" fill="#1a1a1a" stroke="#1a1a1a" stroke-width="0.14" text-anchor="middle" textLength="2.20" lengthAdjust="spacingAndGlyphs">-</text>
<text x="471.40" y="277.82" font-size="7.3" fill="#1a1a1a" stroke="#1a1a1a" stroke-width="0.14" text-anchor="middle" textLength="26.00" lengthAdjust="spacingAndGlyphs">Hombre</text>
<text x="509.90" y="277.82" font-size="7.3" fill="#1a1a1a" stroke="#1a1a1a" stroke-width="0.14" text-anchor="middle" textLength="33.80" lengthAdjust="spacingAndGlyphs">22/02/2023</text>
<text x="597.40" y="277.82" font-size="7.3" fill="#1a1a1a" stroke="#1a1a1a" stroke-width="0.14" textLength="38.80" lengthAdjust="spacingAndGlyphs">PCRs Covid</text>
<text x="27.00" y="292.50" font-size="7.3" fill="#1a1a1a" stroke="#1a1a1a" stroke-width="0.14" textLength="59.60" lengthAdjust="spacingAndGlyphs">zPruebas Manuales</text>
<text x="98.80" y="292.50" font-size="7.3" fill="#1a1a1a" stroke="#1a1a1a" stroke-width="0.14" textLength="28.00" lengthAdjust="spacingAndGlyphs">zPruebas</text>
<text x="174.60" y="292.50" font-size="7.3" fill="#1a1a1a" stroke="#1a1a1a" stroke-width="0.14" textLength="32.00" lengthAdjust="spacingAndGlyphs">Cocineros</text>
<text x="250.60" y="292.50" font-size="7.3" fill="#1a1a1a" stroke="#1a1a1a" stroke-width="0.14" textLength="41.30" lengthAdjust="spacingAndGlyphs">zTrabajador 2</text>
<text x="360.10" y="292.50" font-size="7.3" fill="#1a1a1a" stroke="#1a1a1a" stroke-width="0.14" text-anchor="middle" textLength="28.00" lengthAdjust="spacingAndGlyphs">333333R</text>
<text x="446.30" y="292.50" font-size="7.3" fill="#1a1a1a" stroke="#1a1a1a" stroke-width="0.14" text-anchor="middle" textLength="2.20" lengthAdjust="spacingAndGlyphs">-</text>
<text x="471.40" y="292.50" font-size="7.3" fill="#1a1a1a" stroke="#1a1a1a" stroke-width="0.14" text-anchor="middle" textLength="26.00" lengthAdjust="spacingAndGlyphs">Hombre</text>
<text x="509.90" y="292.50" font-size="7.3" fill="#1a1a1a" stroke="#1a1a1a" stroke-width="0.14" text-anchor="middle" textLength="33.80" lengthAdjust="spacingAndGlyphs">22/02/2023</text>
<text x="597.40" y="292.50" font-size="7.3" fill="#1a1a1a" stroke="#1a1a1a" stroke-width="0.14" textLength="68.50" lengthAdjust="spacingAndGlyphs">Test antigenos COVID</text>
<text x="27.00" y="307.19" font-size="7.3" fill="#1a1a1a" stroke="#1a1a1a" stroke-width="0.14" textLength="59.60" lengthAdjust="spacingAndGlyphs">zPruebas Manuales</text>
<text x="98.80" y="307.19" font-size="7.3" fill="#1a1a1a" stroke="#1a1a1a" stroke-width="0.14" textLength="28.00" lengthAdjust="spacingAndGlyphs">zPruebas</text>
<text x="174.60" y="307.19" font-size="7.3" fill="#1a1a1a" stroke="#1a1a1a" stroke-width="0.14" textLength="32.00" lengthAdjust="spacingAndGlyphs">Cocineros</text>
<text x="250.60" y="307.19" font-size="7.3" fill="#1a1a1a" stroke="#1a1a1a" stroke-width="0.14" textLength="41.30" lengthAdjust="spacingAndGlyphs">zTrabajador 2</text>
<text x="360.10" y="307.19" font-size="7.3" fill="#1a1a1a" stroke="#1a1a1a" stroke-width="0.14" text-anchor="middle" textLength="28.00" lengthAdjust="spacingAndGlyphs">333333R</text>
<text x="446.30" y="307.19" font-size="7.3" fill="#1a1a1a" stroke="#1a1a1a" stroke-width="0.14" text-anchor="middle" textLength="2.20" lengthAdjust="spacingAndGlyphs">-</text>
<text x="471.40" y="307.19" font-size="7.3" fill="#1a1a1a" stroke="#1a1a1a" stroke-width="0.14" text-anchor="middle" textLength="26.00" lengthAdjust="spacingAndGlyphs">Hombre</text>
<text x="509.90" y="307.19" font-size="7.3" fill="#1a1a1a" stroke="#1a1a1a" stroke-width="0.14" text-anchor="middle" textLength="33.80" lengthAdjust="spacingAndGlyphs">22/02/2023</text>
<text x="597.40" y="307.19" font-size="7.3" fill="#1a1a1a" stroke="#1a1a1a" stroke-width="0.14" textLength="36.20" lengthAdjust="spacingAndGlyphs">Test gripe A</text>
<text x="27.00" y="321.87" font-size="7.3" fill="#1a1a1a" stroke="#1a1a1a" stroke-width="0.14" textLength="59.60" lengthAdjust="spacingAndGlyphs">zPruebas Manuales</text>
<text x="98.80" y="321.87" font-size="7.3" fill="#1a1a1a" stroke="#1a1a1a" stroke-width="0.14" textLength="28.00" lengthAdjust="spacingAndGlyphs">zPruebas</text>
<text x="174.60" y="321.87" font-size="7.3" fill="#1a1a1a" stroke="#1a1a1a" stroke-width="0.14" textLength="32.00" lengthAdjust="spacingAndGlyphs">Cocineros</text>
<text x="250.60" y="321.87" font-size="7.3" fill="#1a1a1a" stroke="#1a1a1a" stroke-width="0.14" textLength="41.30" lengthAdjust="spacingAndGlyphs">zTrabajador 2</text>
<text x="360.10" y="321.87" font-size="7.3" fill="#1a1a1a" stroke="#1a1a1a" stroke-width="0.14" text-anchor="middle" textLength="28.00" lengthAdjust="spacingAndGlyphs">333333R</text>
<text x="446.30" y="321.87" font-size="7.3" fill="#1a1a1a" stroke="#1a1a1a" stroke-width="0.14" text-anchor="middle" textLength="2.20" lengthAdjust="spacingAndGlyphs">-</text>
<text x="471.40" y="321.87" font-size="7.3" fill="#1a1a1a" stroke="#1a1a1a" stroke-width="0.14" text-anchor="middle" textLength="26.00" lengthAdjust="spacingAndGlyphs">Hombre</text>
<text x="509.90" y="321.87" font-size="7.3" fill="#1a1a1a" stroke="#1a1a1a" stroke-width="0.14" text-anchor="middle" textLength="33.80" lengthAdjust="spacingAndGlyphs">22/02/2023</text>
<text x="597.40" y="321.87" font-size="7.3" fill="#1a1a1a" stroke="#1a1a1a" stroke-width="0.14" textLength="37.70" lengthAdjust="spacingAndGlyphs">Test Gripe B</text>
<text x="27.00" y="336.55" font-size="7.3" fill="#1a1a1a" stroke="#1a1a1a" stroke-width="0.14" textLength="59.60" lengthAdjust="spacingAndGlyphs">zPruebas Manuales</text>
<text x="98.80" y="336.55" font-size="7.3" fill="#1a1a1a" stroke="#1a1a1a" stroke-width="0.14" textLength="28.00" lengthAdjust="spacingAndGlyphs">zPruebas</text>
<text x="174.60" y="336.55" font-size="7.3" fill="#1a1a1a" stroke="#1a1a1a" stroke-width="0.14" textLength="32.00" lengthAdjust="spacingAndGlyphs">Cocineros</text>
<text x="250.60" y="336.55" font-size="7.3" fill="#1a1a1a" stroke="#1a1a1a" stroke-width="0.14" textLength="40.00" lengthAdjust="spacingAndGlyphs">zTrabajador 1</text>
<text x="360.10" y="336.55" font-size="7.3" fill="#1a1a1a" stroke="#1a1a1a" stroke-width="0.14" text-anchor="middle" textLength="18.20" lengthAdjust="spacingAndGlyphs">111111R</text>
<text x="446.30" y="336.55" font-size="7.3" fill="#1a1a1a" stroke="#1a1a1a" stroke-width="0.14" text-anchor="middle" textLength="2.20" lengthAdjust="spacingAndGlyphs">-</text>
<text x="471.40" y="336.55" font-size="7.3" fill="#1a1a1a" stroke="#1a1a1a" stroke-width="0.14" text-anchor="middle" textLength="26.00" lengthAdjust="spacingAndGlyphs">Hombre</text>
<text x="509.90" y="336.55" font-size="7.3" fill="#1a1a1a" stroke="#1a1a1a" stroke-width="0.14" text-anchor="middle" textLength="33.80" lengthAdjust="spacingAndGlyphs">22/02/2023</text>
<text x="597.40" y="336.55" font-size="7.3" fill="#1a1a1a" stroke="#1a1a1a" stroke-width="0.14" textLength="36.20" lengthAdjust="spacingAndGlyphs">Test gripe A</text>
<text x="27.00" y="351.24" font-size="7.3" fill="#1a1a1a" stroke="#1a1a1a" stroke-width="0.14" textLength="59.60" lengthAdjust="spacingAndGlyphs">zPruebas Manuales</text>
<text x="98.80" y="351.24" font-size="7.3" fill="#1a1a1a" stroke="#1a1a1a" stroke-width="0.14" textLength="28.00" lengthAdjust="spacingAndGlyphs">zPruebas</text>
<text x="174.60" y="351.24" font-size="7.3" fill="#1a1a1a" stroke="#1a1a1a" stroke-width="0.14" textLength="32.00" lengthAdjust="spacingAndGlyphs">Cocineros</text>
<text x="250.60" y="351.24" font-size="7.3" fill="#1a1a1a" stroke="#1a1a1a" stroke-width="0.14" textLength="40.00" lengthAdjust="spacingAndGlyphs">zTrabajador 1</text>
<text x="360.10" y="351.24" font-size="7.3" fill="#1a1a1a" stroke="#1a1a1a" stroke-width="0.14" text-anchor="middle" textLength="18.20" lengthAdjust="spacingAndGlyphs">111111R</text>
<text x="446.30" y="351.24" font-size="7.3" fill="#1a1a1a" stroke="#1a1a1a" stroke-width="0.14" text-anchor="middle" textLength="2.20" lengthAdjust="spacingAndGlyphs">-</text>
<text x="471.40" y="351.24" font-size="7.3" fill="#1a1a1a" stroke="#1a1a1a" stroke-width="0.14" text-anchor="middle" textLength="26.00" lengthAdjust="spacingAndGlyphs">Hombre</text>
<text x="509.90" y="351.24" font-size="7.3" fill="#1a1a1a" stroke="#1a1a1a" stroke-width="0.14" text-anchor="middle" textLength="33.80" lengthAdjust="spacingAndGlyphs">22/02/2023</text>
<text x="597.40" y="351.24" font-size="7.3" fill="#1a1a1a" stroke="#1a1a1a" stroke-width="0.14" textLength="37.70" lengthAdjust="spacingAndGlyphs">Test Gripe B</text>
<text x="27.00" y="365.92" font-size="7.3" fill="#1a1a1a" stroke="#1a1a1a" stroke-width="0.14" textLength="59.60" lengthAdjust="spacingAndGlyphs">zPruebas Manuales</text>
<text x="98.80" y="365.92" font-size="7.3" fill="#1a1a1a" stroke="#1a1a1a" stroke-width="0.14" textLength="28.00" lengthAdjust="spacingAndGlyphs">zPruebas</text>
<text x="174.60" y="365.92" font-size="7.3" fill="#1a1a1a" stroke="#1a1a1a" stroke-width="0.14" textLength="32.00" lengthAdjust="spacingAndGlyphs">Cocineros</text>
<text x="250.60" y="365.92" font-size="7.3" fill="#1a1a1a" stroke="#1a1a1a" stroke-width="0.14" textLength="35.50" lengthAdjust="spacingAndGlyphs">zTrabajador</text>
<text x="360.10" y="365.92" font-size="7.3" fill="#1a1a1a" stroke="#1a1a1a" stroke-width="0.14" text-anchor="middle" textLength="27.20" lengthAdjust="spacingAndGlyphs">222222R</text>
<text x="446.30" y="365.92" font-size="7.3" fill="#1a1a1a" stroke="#1a1a1a" stroke-width="0.14" text-anchor="middle" textLength="2.20" lengthAdjust="spacingAndGlyphs">-</text>
<text x="471.40" y="365.92" font-size="7.3" fill="#1a1a1a" stroke="#1a1a1a" stroke-width="0.14" text-anchor="middle" textLength="17.50" lengthAdjust="spacingAndGlyphs">Mujer</text>
<text x="509.90" y="365.92" font-size="7.3" fill="#1a1a1a" stroke="#1a1a1a" stroke-width="0.14" text-anchor="middle" textLength="33.80" lengthAdjust="spacingAndGlyphs">22/02/2023</text>
<text x="597.40" y="365.92" font-size="7.3" fill="#1a1a1a" stroke="#1a1a1a" stroke-width="0.14" textLength="68.50" lengthAdjust="spacingAndGlyphs">Test antigenos COVID</text>
<text x="27.00" y="380.61" font-size="7.3" fill="#1a1a1a" stroke="#1a1a1a" stroke-width="0.14" textLength="59.60" lengthAdjust="spacingAndGlyphs">zPruebas Manuales</text>
<text x="98.80" y="380.61" font-size="7.3" fill="#1a1a1a" stroke="#1a1a1a" stroke-width="0.14" textLength="28.00" lengthAdjust="spacingAndGlyphs">zPruebas</text>
<text x="174.60" y="380.61" font-size="7.3" fill="#1a1a1a" stroke="#1a1a1a" stroke-width="0.14" textLength="32.00" lengthAdjust="spacingAndGlyphs">Cocineros</text>
<text x="250.60" y="380.61" font-size="7.3" fill="#1a1a1a" stroke="#1a1a1a" stroke-width="0.14" textLength="35.50" lengthAdjust="spacingAndGlyphs">zTrabajador</text>
<text x="360.10" y="380.61" font-size="7.3" fill="#1a1a1a" stroke="#1a1a1a" stroke-width="0.14" text-anchor="middle" textLength="27.20" lengthAdjust="spacingAndGlyphs">222222R</text>
<text x="446.30" y="380.61" font-size="7.3" fill="#1a1a1a" stroke="#1a1a1a" stroke-width="0.14" text-anchor="middle" textLength="2.20" lengthAdjust="spacingAndGlyphs">-</text>
<text x="471.40" y="380.61" font-size="7.3" fill="#1a1a1a" stroke="#1a1a1a" stroke-width="0.14" text-anchor="middle" textLength="17.50" lengthAdjust="spacingAndGlyphs">Mujer</text>
<text x="509.90" y="380.61" font-size="7.3" fill="#1a1a1a" stroke="#1a1a1a" stroke-width="0.14" text-anchor="middle" textLength="33.80" lengthAdjust="spacingAndGlyphs">22/02/2023</text>
<text x="597.40" y="380.61" font-size="7.3" fill="#1a1a1a" stroke="#1a1a1a" stroke-width="0.14" textLength="36.20" lengthAdjust="spacingAndGlyphs">Test gripe A</text>
<text x="27.00" y="395.29" font-size="7.3" fill="#1a1a1a" stroke="#1a1a1a" stroke-width="0.14" textLength="59.60" lengthAdjust="spacingAndGlyphs">zPruebas Manuales</text>
<text x="98.80" y="395.29" font-size="7.3" fill="#1a1a1a" stroke="#1a1a1a" stroke-width="0.14" textLength="28.00" lengthAdjust="spacingAndGlyphs">zPruebas</text>
<text x="174.60" y="395.29" font-size="7.3" fill="#1a1a1a" stroke="#1a1a1a" stroke-width="0.14" textLength="32.00" lengthAdjust="spacingAndGlyphs">Cocineros</text>
<text x="250.60" y="395.29" font-size="7.3" fill="#1a1a1a" stroke="#1a1a1a" stroke-width="0.14" textLength="35.50" lengthAdjust="spacingAndGlyphs">zTrabajador</text>
<text x="360.10" y="395.29" font-size="7.3" fill="#1a1a1a" stroke="#1a1a1a" stroke-width="0.14" text-anchor="middle" textLength="27.20" lengthAdjust="spacingAndGlyphs">222222R</text>
<text x="446.30" y="395.29" font-size="7.3" fill="#1a1a1a" stroke="#1a1a1a" stroke-width="0.14" text-anchor="middle" textLength="2.20" lengthAdjust="spacingAndGlyphs">-</text>
<text x="471.40" y="395.29" font-size="7.3" fill="#1a1a1a" stroke="#1a1a1a" stroke-width="0.14" text-anchor="middle" textLength="17.50" lengthAdjust="spacingAndGlyphs">Mujer</text>
<text x="509.90" y="395.29" font-size="7.3" fill="#1a1a1a" stroke="#1a1a1a" stroke-width="0.14" text-anchor="middle" textLength="33.80" lengthAdjust="spacingAndGlyphs">22/02/2023</text>
<text x="597.40" y="395.29" font-size="7.3" fill="#1a1a1a" stroke="#1a1a1a" stroke-width="0.14" textLength="37.70" lengthAdjust="spacingAndGlyphs">Test Gripe B</text>
<text x="27.00" y="409.97" font-size="7.3" fill="#1a1a1a" stroke="#1a1a1a" stroke-width="0.14" textLength="59.60" lengthAdjust="spacingAndGlyphs">zPruebas Manuales</text>
<text x="98.80" y="409.97" font-size="7.3" fill="#1a1a1a" stroke="#1a1a1a" stroke-width="0.14" textLength="28.00" lengthAdjust="spacingAndGlyphs">zPruebas</text>
<text x="174.60" y="409.97" font-size="7.3" fill="#1a1a1a" stroke="#1a1a1a" stroke-width="0.14" textLength="32.00" lengthAdjust="spacingAndGlyphs">Cocineros</text>
<text x="250.60" y="409.97" font-size="7.3" fill="#1a1a1a" stroke="#1a1a1a" stroke-width="0.14" textLength="40.00" lengthAdjust="spacingAndGlyphs">zTrabajador 1</text>
<text x="360.10" y="409.97" font-size="7.3" fill="#1a1a1a" stroke="#1a1a1a" stroke-width="0.14" text-anchor="middle" textLength="18.20" lengthAdjust="spacingAndGlyphs">111111R</text>
<text x="446.30" y="409.97" font-size="7.3" fill="#1a1a1a" stroke="#1a1a1a" stroke-width="0.14" text-anchor="middle" textLength="2.20" lengthAdjust="spacingAndGlyphs">-</text>
<text x="471.40" y="409.97" font-size="7.3" fill="#1a1a1a" stroke="#1a1a1a" stroke-width="0.14" text-anchor="middle" textLength="26.00" lengthAdjust="spacingAndGlyphs">Hombre</text>
<text x="509.90" y="409.97" font-size="7.3" fill="#1a1a1a" stroke="#1a1a1a" stroke-width="0.14" text-anchor="middle" textLength="33.80" lengthAdjust="spacingAndGlyphs">22/02/2023</text>
<text x="561.30" y="409.97" font-size="7.3" fill="#1a1a1a" stroke="#1a1a1a" stroke-width="0.14" text-anchor="middle" textLength="33.30" lengthAdjust="spacingAndGlyphs">10/02/2023</text>
<text x="597.40" y="409.97" font-size="7.3" fill="#1a1a1a" stroke="#1a1a1a" stroke-width="0.14" textLength="38.80" lengthAdjust="spacingAndGlyphs">PCRs Covid</text>
<text x="691.60" y="409.97" font-size="7.3" fill="#1a1a1a" stroke="#1a1a1a" stroke-width="0.14" text-anchor="middle" textLength="27.20" lengthAdjust="spacingAndGlyphs">Positivo</text>
<text x="723.70" y="409.97" font-size="7.3" fill="#1a1a1a" stroke="#1a1a1a" stroke-width="0.14" textLength="6.30" lengthAdjust="spacingAndGlyphs">Si</text>
<text x="27.00" y="424.66" font-size="7.3" fill="#1a1a1a" stroke="#1a1a1a" stroke-width="0.14" textLength="59.60" lengthAdjust="spacingAndGlyphs">zPruebas Manuales</text>
<text x="98.80" y="424.66" font-size="7.3" fill="#1a1a1a" stroke="#1a1a1a" stroke-width="0.14" textLength="28.00" lengthAdjust="spacingAndGlyphs">zPruebas</text>
<text x="174.60" y="424.66" font-size="7.3" fill="#1a1a1a" stroke="#1a1a1a" stroke-width="0.14" textLength="32.00" lengthAdjust="spacingAndGlyphs">Cocineros</text>
<text x="250.60" y="424.66" font-size="7.3" fill="#1a1a1a" stroke="#1a1a1a" stroke-width="0.14" textLength="35.50" lengthAdjust="spacingAndGlyphs">zTrabajador</text>
<text x="360.10" y="424.66" font-size="7.3" fill="#1a1a1a" stroke="#1a1a1a" stroke-width="0.14" text-anchor="middle" textLength="27.20" lengthAdjust="spacingAndGlyphs">222222R</text>
<text x="446.30" y="424.66" font-size="7.3" fill="#1a1a1a" stroke="#1a1a1a" stroke-width="0.14" text-anchor="middle" textLength="2.20" lengthAdjust="spacingAndGlyphs">-</text>
<text x="471.40" y="424.66" font-size="7.3" fill="#1a1a1a" stroke="#1a1a1a" stroke-width="0.14" text-anchor="middle" textLength="17.50" lengthAdjust="spacingAndGlyphs">Mujer</text>
<text x="509.90" y="424.66" font-size="7.3" fill="#1a1a1a" stroke="#1a1a1a" stroke-width="0.14" text-anchor="middle" textLength="34.20" lengthAdjust="spacingAndGlyphs">20/02/2023</text>
<text x="561.30" y="424.66" font-size="7.3" fill="#1a1a1a" stroke="#1a1a1a" stroke-width="0.14" text-anchor="middle" textLength="33.80" lengthAdjust="spacingAndGlyphs">22/02/2023</text>
<text x="597.40" y="424.66" font-size="7.3" fill="#1a1a1a" stroke="#1a1a1a" stroke-width="0.14" textLength="38.80" lengthAdjust="spacingAndGlyphs">PCRs Covid</text>
<text x="691.60" y="424.66" font-size="7.3" fill="#1a1a1a" stroke="#1a1a1a" stroke-width="0.14" text-anchor="middle" textLength="27.20" lengthAdjust="spacingAndGlyphs">Positivo</text>
<text x="723.70" y="424.66" font-size="7.3" fill="#1a1a1a" stroke="#1a1a1a" stroke-width="0.14" textLength="6.30" lengthAdjust="spacingAndGlyphs">Si</text>
<text x="27.00" y="439.34" font-size="7.3" fill="#1a1a1a" stroke="#1a1a1a" stroke-width="0.14" textLength="59.60" lengthAdjust="spacingAndGlyphs">zPruebas Manuales</text>
<text x="98.80" y="439.34" font-size="7.3" fill="#1a1a1a" stroke="#1a1a1a" stroke-width="0.14" textLength="28.00" lengthAdjust="spacingAndGlyphs">zPruebas</text>
<text x="174.60" y="439.34" font-size="7.3" fill="#1a1a1a" stroke="#1a1a1a" stroke-width="0.14" textLength="32.00" lengthAdjust="spacingAndGlyphs">Cocineros</text>
<text x="250.60" y="439.34" font-size="7.3" fill="#1a1a1a" stroke="#1a1a1a" stroke-width="0.14" textLength="35.50" lengthAdjust="spacingAndGlyphs">zTrabajador</text>
<text x="360.10" y="439.34" font-size="7.3" fill="#1a1a1a" stroke="#1a1a1a" stroke-width="0.14" text-anchor="middle" textLength="27.20" lengthAdjust="spacingAndGlyphs">222222R</text>
<text x="446.30" y="439.34" font-size="7.3" fill="#1a1a1a" stroke="#1a1a1a" stroke-width="0.14" text-anchor="middle" textLength="2.20" lengthAdjust="spacingAndGlyphs">-</text>
<text x="471.40" y="439.34" font-size="7.3" fill="#1a1a1a" stroke="#1a1a1a" stroke-width="0.14" text-anchor="middle" textLength="17.50" lengthAdjust="spacingAndGlyphs">Mujer</text>
<text x="509.90" y="439.34" font-size="7.3" fill="#1a1a1a" stroke="#1a1a1a" stroke-width="0.14" text-anchor="middle" textLength="32.80" lengthAdjust="spacingAndGlyphs">22/01/2023</text>
<text x="561.30" y="439.34" font-size="7.3" fill="#1a1a1a" stroke="#1a1a1a" stroke-width="0.14" text-anchor="middle" textLength="33.30" lengthAdjust="spacingAndGlyphs">10/02/2023</text>
<text x="597.40" y="439.34" font-size="7.3" fill="#1a1a1a" stroke="#1a1a1a" stroke-width="0.14" textLength="38.80" lengthAdjust="spacingAndGlyphs">PCRs Covid</text>
<text x="723.70" y="439.34" font-size="7.3" fill="#1a1a1a" stroke="#1a1a1a" stroke-width="0.14" textLength="43.60" lengthAdjust="spacingAndGlyphs">No se conoce</text>
<text x="27.00" y="454.03" font-size="7.3" fill="#1a1a1a" stroke="#1a1a1a" stroke-width="0.14" textLength="59.60" lengthAdjust="spacingAndGlyphs">zPruebas Manuales</text>
<text x="98.80" y="454.03" font-size="7.3" fill="#1a1a1a" stroke="#1a1a1a" stroke-width="0.14" textLength="28.00" lengthAdjust="spacingAndGlyphs">zPruebas</text>
<text x="174.60" y="454.03" font-size="7.3" fill="#1a1a1a" stroke="#1a1a1a" stroke-width="0.14" textLength="32.00" lengthAdjust="spacingAndGlyphs">Cocineros</text>
<text x="250.60" y="454.03" font-size="7.3" fill="#1a1a1a" stroke="#1a1a1a" stroke-width="0.14" textLength="40.00" lengthAdjust="spacingAndGlyphs">zTrabajador 1</text>
<text x="360.10" y="454.03" font-size="7.3" fill="#1a1a1a" stroke="#1a1a1a" stroke-width="0.14" text-anchor="middle" textLength="18.20" lengthAdjust="spacingAndGlyphs">111111R</text>
<text x="446.30" y="454.03" font-size="7.3" fill="#1a1a1a" stroke="#1a1a1a" stroke-width="0.14" text-anchor="middle" textLength="2.20" lengthAdjust="spacingAndGlyphs">-</text>
<text x="471.40" y="454.03" font-size="7.3" fill="#1a1a1a" stroke="#1a1a1a" stroke-width="0.14" text-anchor="middle" textLength="26.00" lengthAdjust="spacingAndGlyphs">Hombre</text>
<text x="509.90" y="454.03" font-size="7.3" fill="#1a1a1a" stroke="#1a1a1a" stroke-width="0.14" text-anchor="middle" textLength="32.80" lengthAdjust="spacingAndGlyphs">22/01/2023</text>
<text x="561.30" y="454.03" font-size="7.3" fill="#1a1a1a" stroke="#1a1a1a" stroke-width="0.14" text-anchor="middle" textLength="33.30" lengthAdjust="spacingAndGlyphs">10/02/2023</text>
<text x="597.40" y="454.03" font-size="7.3" fill="#1a1a1a" stroke="#1a1a1a" stroke-width="0.14" textLength="38.80" lengthAdjust="spacingAndGlyphs">PCRs Covid</text>
<text x="691.60" y="454.03" font-size="7.3" fill="#1a1a1a" stroke="#1a1a1a" stroke-width="0.14" text-anchor="middle" textLength="29.00" lengthAdjust="spacingAndGlyphs">Negativo</text>
<text x="723.70" y="454.03" font-size="7.3" fill="#1a1a1a" stroke="#1a1a1a" stroke-width="0.14" textLength="9.50" lengthAdjust="spacingAndGlyphs">No</text>
<rect x="812" y="150" width="15" height="333" fill="#e9ebe4"/>
<rect x="814.5" y="152.5" width="10" height="10" fill="#fefef7" stroke="#a6a8a0" stroke-width="1"/>
<path d="M817 159 L822 159 L819.5 155.5 Z" fill="#222"/>
<rect x="814.5" y="163.5" width="10" height="293" fill="#fefef7" stroke="#a6a8a0" stroke-width="1"/>
<rect x="814.5" y="473.5" width="10" height="10" fill="#fefef7" stroke="#a6a8a0" stroke-width="1"/>
<path d="M817 476.5 L822 476.5 L819.5 480 Z" fill="#222"/>
<rect x="0" y="483" width="827" height="20" fill="#e9ebe4"/>
<rect x="0" y="483" width="73" height="1" fill="#a8aaa2"/>
<rect x="117" y="483" width="710" height="1" fill="#a8aaa2"/>
<rect x="73" y="483" width="44" height="19" fill="#fefef7"/>
<rect x="73" y="483" width="1" height="19" fill="#a8aaa2"/>
<rect x="116" y="483" width="1" height="19" fill="#a8aaa2"/>
<rect x="73" y="500" width="44" height="2" fill="#1f7a48"/>
<text x="81.80" y="496.20" font-size="10" fill="#1f6a45" font-weight="bold" textLength="25.50" lengthAdjust="spacingAndGlyphs">Hoja1</text>
<path d="M22 490 L19 493 L22 496 Z" fill="#b9bbb3"/>
<path d="M40 490 L43 493 L40 496 Z" fill="#b9bbb3"/>
<circle cx="147" cy="493" r="5.6" fill="none" stroke="#707070" stroke-width="1"/>
<path d="M144 493 H150 M147 490 V496" fill="none" stroke="#555" stroke-width="1.2"/>
<rect x="495.2" y="490.0" width="1" height="1" fill="#a0a0a0"/>
<rect x="495.2" y="493.0" width="1" height="1" fill="#a0a0a0"/>
<rect x="495.2" y="496.0" width="1" height="1" fill="#a0a0a0"/>
<rect x="508.5" y="488.5" width="10.5" height="10" fill="#fefef7" stroke="#a6a8a0" stroke-width="1"/>
<path d="M515 490.5 L515 496.5 L511.5 493.5 Z" fill="#222"/>
<rect x="519" y="488.5" width="260" height="10" fill="#fefef7" stroke="#a6a8a0" stroke-width="1"/>
<rect x="801" y="488.5" width="10.5" height="10" fill="#fefef7" stroke="#a6a8a0" stroke-width="1"/>
<path d="M804.5 490.5 L804.5 496.5 L808 493.5 Z" fill="#222"/>
<rect x="0" y="503" width="827" height="14" fill="#fcfcf5"/>
<rect x="0" y="503" width="827" height="1" fill="#d9dbd3"/>
<text x="4.50" y="515.10" font-size="9" fill="#333" stroke="#333" stroke-width="0.2" textLength="16.50" lengthAdjust="spacingAndGlyphs">Listo</text>
<path d="M38.8 507.6 C35.8 509 35.8 514 39.6 515.6" fill="none" stroke="#4a4a4a" stroke-width="1.1"/>
<path d="M40.5 506 V511 H45.2 M43.8 509.5 L45.3 511 L43.8 512.5" fill="none" stroke="#4a4a4a" stroke-width="1.1"/>
<path d="M41.8 514 L43.6 516 L47.3 512" fill="none" stroke="#4a4a4a" stroke-width="1.2"/>
<text x="49.30" y="515.00" font-size="9" fill="#333" stroke="#333" stroke-width="0.2" textLength="104.90" lengthAdjust="spacingAndGlyphs">Accesibilidad: todo correcto</text>
<text x="533.20" y="514.60" font-size="9" fill="#333" stroke="#333" stroke-width="0.2" textLength="49.10" lengthAdjust="spacingAndGlyphs">Recuento: 13</text>
<rect x="596.5" y="504" width="28.5" height="13" fill="#d6d8d0"/>
<rect x="606.5" y="506.5" width="9" height="9" fill="none" stroke="#666" stroke-width="0.9"/>
<rect x="606.5" y="509.5" width="9.0" height="1" fill="#666"/>
<rect x="606.5" y="512.5" width="9.0" height="1" fill="#666"/>
<rect x="609.5" y="506.5" width="1" height="9.0" fill="#666"/>
<rect x="612.5" y="506.5" width="1" height="9.0" fill="#666"/>
<rect x="635" y="506.5" width="10.5" height="9" fill="none" stroke="#666" stroke-width="0.9"/>
<rect x="637.5" y="508.5" width="5.5" height="5" fill="none" stroke="#888" stroke-width="0.8"/>
<rect x="664.5" y="506.5" width="10" height="9" fill="none" stroke="#666" stroke-width="0.9"/>
<rect x="669" y="506.5" width="1" height="4.5" fill="#666"/>
<rect x="664.5" y="510.5" width="5.0" height="1" fill="#666"/>
<rect x="689" y="511" width="5.5" height="1" fill="#555"/>
<rect x="698.5" y="511" width="73.0" height="1" fill="#777"/>
<rect x="734" y="508" width="3.4" height="7.3" fill="#333"/>
<rect x="776" y="511" width="5.5" height="1" fill="#555"/>
<rect x="778.3" y="508.5" width="1" height="5.5" fill="#555"/>
<text x="791.00" y="515.00" font-size="9" fill="#333" stroke="#333" stroke-width="0.2" textLength="21.40" lengthAdjust="spacingAndGlyphs">100 %</text>
</svg>
</body></html>
